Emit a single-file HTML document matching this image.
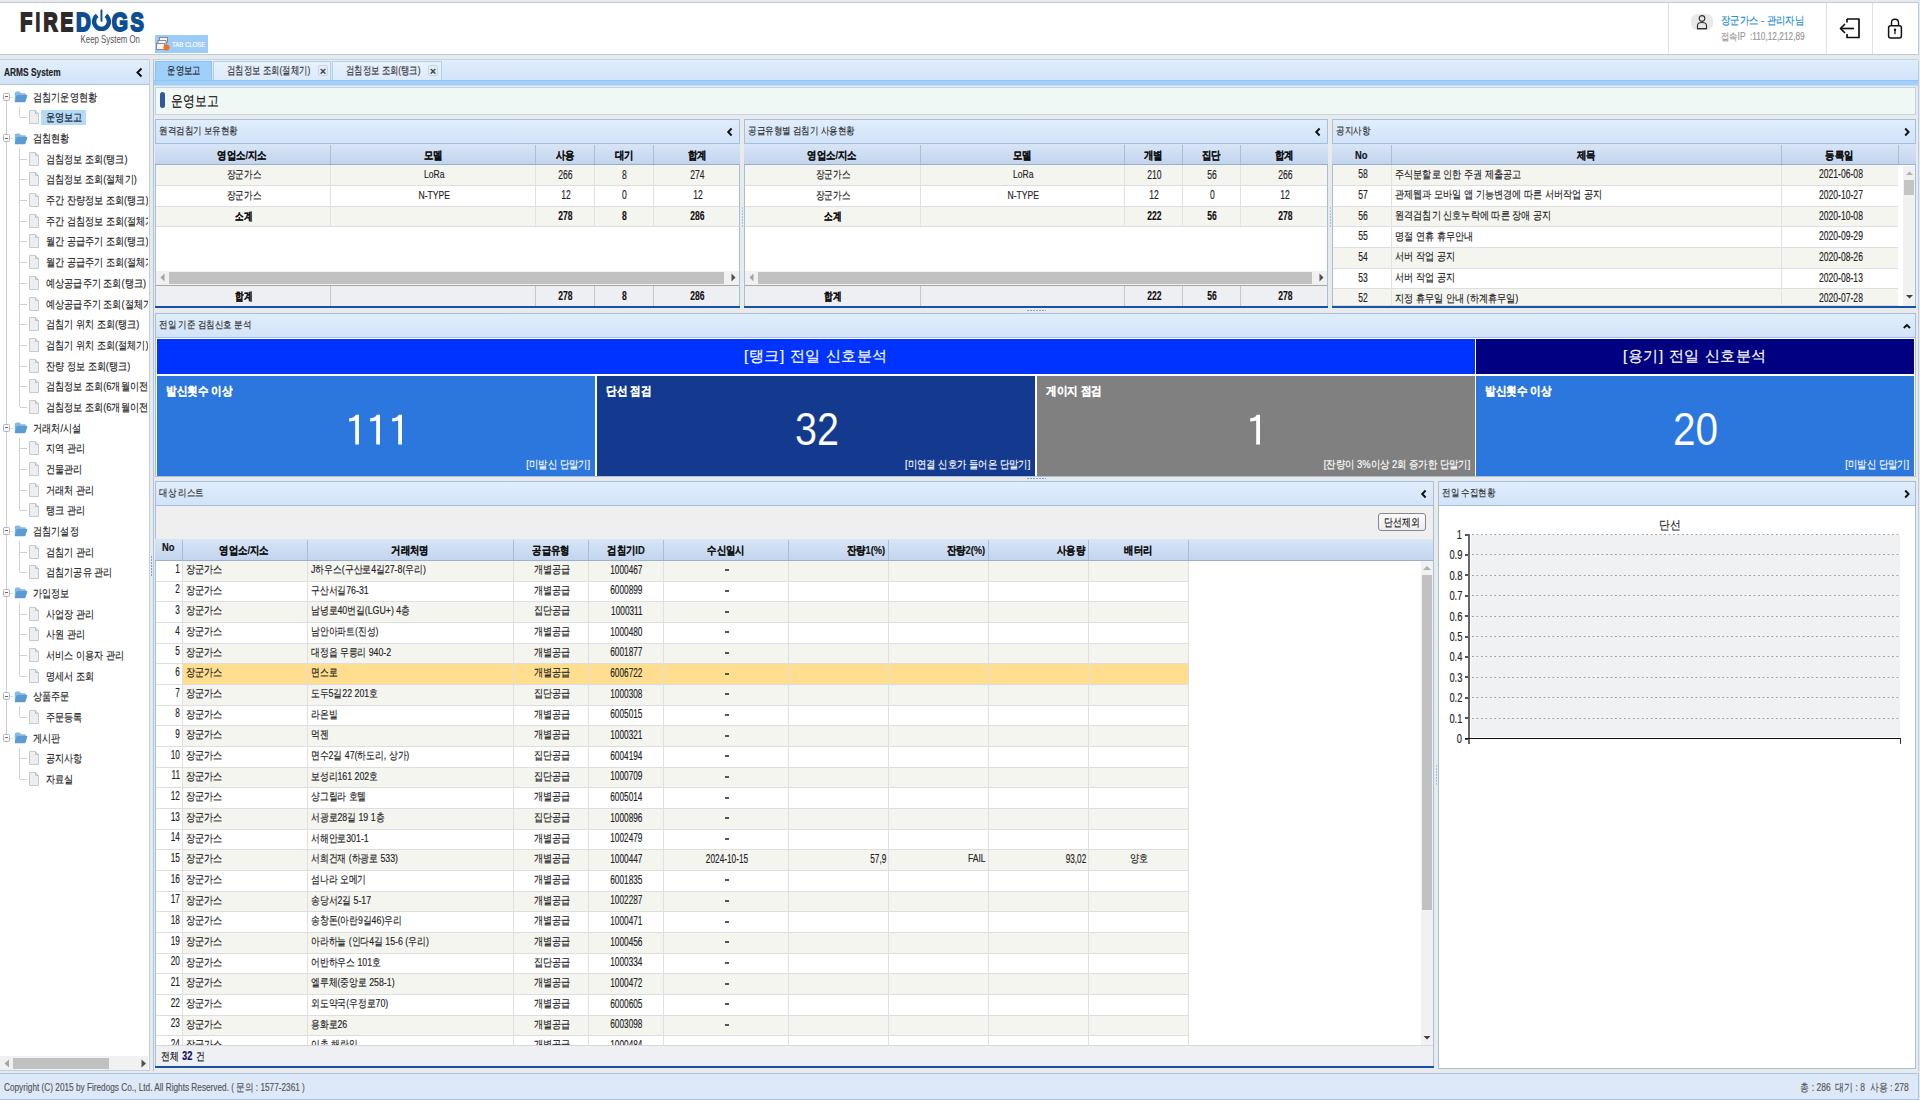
<!DOCTYPE html><html><head><meta charset="utf-8"><style>
html,body{margin:0;padding:0;}
body{width:1920px;height:1100px;overflow:hidden;position:relative;background:#e9e9e9;font-family:"Liberation Sans",sans-serif;}
body div{position:absolute;box-sizing:border-box;}
.tx{white-space:pre;height:auto;}
.tx span{display:inline-block;-webkit-text-stroke:0.15px currentColor;}
.phd{background:linear-gradient(#e0eefc,#d2e3f8);}
.ghd{background:linear-gradient(#d6e4f5,#c4d6ee);}
</style></head><body><div style="left:0px;top:2px;width:1919px;height:53px;background:#fff;border:1px solid #b9cde2;border-left:none;"></div>
<div style="left:1668px;top:3px;width:1px;height:51px;background:#e2e2e2;"></div>
<div style="left:1826px;top:3px;width:1px;height:51px;background:#e2e2e2;"></div>
<div style="left:1872px;top:3px;width:1px;height:51px;background:#e2e2e2;"></div>
<svg style="position:absolute;left:0;top:0" width="160" height="50"><text x="20.3" y="30.8" font-family="Liberation Sans" font-weight="bold" font-size="26" fill="#2d2a29" stroke="#2d2a29" stroke-width="2.0" textLength="11.999999999999996" lengthAdjust="spacingAndGlyphs">F</text><text x="35.8" y="30.8" font-family="Liberation Sans" font-weight="bold" font-size="26" fill="#2d2a29" stroke="#2d2a29" stroke-width="2.0" textLength="4.200000000000003" lengthAdjust="spacingAndGlyphs">I</text><text x="43.5" y="30.8" font-family="Liberation Sans" font-weight="bold" font-size="26" fill="#2d2a29" stroke="#2d2a29" stroke-width="2.0" textLength="14.100000000000001" lengthAdjust="spacingAndGlyphs">R</text><text x="60.4" y="30.8" font-family="Liberation Sans" font-weight="bold" font-size="26" fill="#2d2a29" stroke="#2d2a29" stroke-width="2.0" textLength="12.600000000000001" lengthAdjust="spacingAndGlyphs">E</text><text x="75.9" y="30.8" font-family="Liberation Sans" font-weight="bold" font-size="26" fill="#0d4d92" stroke="#0d4d92" stroke-width="2.0" textLength="14.799999999999997" lengthAdjust="spacingAndGlyphs">D</text><text x="111.7" y="30.8" font-family="Liberation Sans" font-weight="bold" font-size="26" fill="#0d4d92" stroke="#0d4d92" stroke-width="2.0" textLength="16.200000000000003" lengthAdjust="spacingAndGlyphs">G</text><text x="130.4" y="30.8" font-family="Liberation Sans" font-weight="bold" font-size="26" fill="#0d4d92" stroke="#0d4d92" stroke-width="2.0" textLength="13.299999999999983" lengthAdjust="spacingAndGlyphs">S</text><path d="M97.2 15.5 A7.4 7.4 0 1 0 105.8 15.5" fill="none" stroke="#0d4d92" stroke-width="4.3"/><rect x="100.5" y="9.6" width="1.9" height="12" fill="#0d4d92"/><text x="80.5" y="43" font-family="Liberation Sans" font-size="10.5" fill="#555" textLength="59.5" lengthAdjust="spacingAndGlyphs">Keep System On</text></svg>
<div style="left:155px;top:35px;width:53px;height:18px;background:#9dcbf8;"></div>
<svg style="position:absolute;left:156px;top:37px" width="14" height="14">
<rect x="3.5" y="0.5" width="8" height="5" fill="#f4f4f4" stroke="#777" stroke-width="0.8"/>
<rect x="2" y="3.5" width="8" height="5" fill="#f4f4f4" stroke="#777" stroke-width="0.8"/>
<rect x="0.5" y="6.5" width="8" height="6" fill="#f4f4f4" stroke="#777" stroke-width="0.8"/>
<circle cx="10.5" cy="10.5" r="3" fill="#f07020"/>
</svg>
<div class="tx" style="left:171.5px;top:35.8px;line-height:18px;font-size:8px;color:#fff;font-weight:normal;"><span style="transform:scaleX(0.75);transform-origin:0 50%">TAB CLOSE</span></div>
<div style="left:1691px;top:14px;width:22px;height:16px;background:#e9e9e9;border-radius:6px;"></div>
<svg style="position:absolute;left:1691px;top:14px" width="22" height="16">
<circle cx="11" cy="4.5" r="2.8" fill="none" stroke="#333" stroke-width="1.2"/>
<path d="M6.5 14.5 V11.5 Q6.5 8.5 11 8.5 Q15.5 8.5 15.5 11.5 V14.5 Z" fill="none" stroke="#333" stroke-width="1.2"/>
<line x1="6" y1="14.8" x2="16" y2="14.8" stroke="#333" stroke-width="1.2"/>
</svg>
<div class="tx" style="left:1721px;top:10px;line-height:20px;font-size:11px;color:#1d8ad6;font-weight:normal;"><span style="transform:scaleX(0.85);transform-origin:0 50%">장군가스 - 관리자님</span></div>
<div class="tx" style="left:1721px;top:26.7px;line-height:20px;font-size:10px;color:#969696;font-weight:normal;"><span style="transform:scaleX(0.83);transform-origin:0 50%">접속IP  :110,12,212,89</span></div>
<svg style="position:absolute;left:1838px;top:17px" width="24" height="23">
<path d="M9 2 H21 V20.5 H9 V17" fill="none" stroke="#111" stroke-width="1.7" stroke-linejoin="round"/>
<path d="M9 2 V5.5" fill="none" stroke="#111" stroke-width="1.7"/>
<path d="M2.5 11.5 H16" stroke="#111" stroke-width="1.7"/>
<path d="M7 7 L2.5 11.5 L7 16" fill="none" stroke="#111" stroke-width="1.7" stroke-linejoin="round"/>
</svg>
<svg style="position:absolute;left:1886px;top:17px" width="18" height="23">
<path d="M5.5 8.5 V5.5 Q5.5 2.2 9 2.2 Q12.5 2.2 12.5 5.5 V8.5" fill="none" stroke="#111" stroke-width="1.4"/>
<rect x="2.6" y="8.8" width="12.8" height="12.2" rx="2" fill="none" stroke="#111" stroke-width="1.5"/>
<circle cx="9" cy="12.8" r="1.2" fill="#111"/>
<rect x="8.4" y="13" width="1.2" height="4.2" fill="#111"/>
</svg>
<div style="left:0px;top:59px;width:150px;height:1012px;background:#fff;border:1px solid #c2d0de;border-left:none;border-top:none;"></div>
<div style="left:0px;top:59px;width:149px;height:26px;background:linear-gradient(#e3effc,#d1e3f8);border-bottom:1px solid #a8c6e6;border-top:1px solid #b8d0ea;"></div>
<div class="tx" style="left:4px;top:62px;line-height:20px;font-size:11px;color:#222;font-weight:bold;"><span style="transform:scaleX(0.76);transform-origin:0 50%">ARMS System</span></div>
<svg style="position:absolute;left:135px;top:67px" width="9" height="11"><path d="M6.5 1.5 L2.5 5.5 L6.5 9.5" fill="none" stroke="#111" stroke-width="2"/></svg>
<div style="left:0;top:0;width:148px;height:1056px;overflow:hidden;">
<svg style="position:absolute;left:13.5px;top:91.3px" width="14" height="12"><path d="M0.8 2.2 Q0.8 0.6 2.4 0.6 H5 Q5.8 0.6 6.4 1.4 L7 2.2 H10.6 Q12 2.2 12 3.6 V9.5 H0.8 Z" fill="#86b9e4"/><path d="M2.6 4.6 Q2.8 3.9 3.6 3.9 H12.6 Q13.6 3.9 13.3 4.9 L11.6 10.2 Q11.3 11.2 10.3 11.2 H1.4 Q0.5 11.2 0.8 10.3 Z" fill="#5b9ad4"/></svg>
<div style="left:3px;top:92.8px;width:7px;height:8px;background:linear-gradient(#fff,#eef0f3);border:1px solid #b0b4bb;border-radius:1.5px;"></div>
<div style="left:5px;top:96.3px;width:3px;height:1px;background:#6a6a6a;"></div>
<div style="left:10px;top:96.8px;width:3px;height:1px;background:#ddd;"></div>
<div class="tx" style="left:33px;top:86.8px;line-height:20px;font-size:11px;color:#222;font-weight:normal;"><span style="transform:scaleX(0.83);transform-origin:0 50%">검침기운영현황</span></div>
<svg style="position:absolute;left:29px;top:110.47px" width="10" height="14"><path d="M0.5 0.5 H6.5 L9.5 3.5 V13.5 H0.5 Z" fill="#eceef1" stroke="#c6cacf" stroke-width="1"/><path d="M6.5 0.5 V3.5 H9.5" fill="#d8dce0" stroke="#b5bac0" stroke-width="0.8"/></svg>
<div style="left:20px;top:117.47px;width:7px;height:1px;background:#d0d0d0;"></div>
<div style="left:41px;top:109.97px;width:45px;height:15px;background:#b4dafa;"></div>
<div class="tx" style="left:46px;top:107.47px;line-height:20px;font-size:11px;color:#111;font-weight:normal;"><span style="transform:scaleX(0.83);transform-origin:0 50%">운영보고</span></div>
<svg style="position:absolute;left:13.5px;top:132.64px" width="14" height="12"><path d="M0.8 2.2 Q0.8 0.6 2.4 0.6 H5 Q5.8 0.6 6.4 1.4 L7 2.2 H10.6 Q12 2.2 12 3.6 V9.5 H0.8 Z" fill="#86b9e4"/><path d="M2.6 4.6 Q2.8 3.9 3.6 3.9 H12.6 Q13.6 3.9 13.3 4.9 L11.6 10.2 Q11.3 11.2 10.3 11.2 H1.4 Q0.5 11.2 0.8 10.3 Z" fill="#5b9ad4"/></svg>
<div style="left:3px;top:134.14px;width:7px;height:8px;background:linear-gradient(#fff,#eef0f3);border:1px solid #b0b4bb;border-radius:1.5px;"></div>
<div style="left:5px;top:137.64px;width:3px;height:1px;background:#6a6a6a;"></div>
<div style="left:10px;top:138.14px;width:3px;height:1px;background:#ddd;"></div>
<div class="tx" style="left:33px;top:128.14px;line-height:20px;font-size:11px;color:#222;font-weight:normal;"><span style="transform:scaleX(0.83);transform-origin:0 50%">검침현황</span></div>
<svg style="position:absolute;left:29px;top:151.81px" width="10" height="14"><path d="M0.5 0.5 H6.5 L9.5 3.5 V13.5 H0.5 Z" fill="#eceef1" stroke="#c6cacf" stroke-width="1"/><path d="M6.5 0.5 V3.5 H9.5" fill="#d8dce0" stroke="#b5bac0" stroke-width="0.8"/></svg>
<div style="left:20px;top:158.81px;width:7px;height:1px;background:#d0d0d0;"></div>
<div class="tx" style="left:46px;top:148.81px;line-height:20px;font-size:11px;color:#222;font-weight:normal;"><span style="transform:scaleX(0.83);transform-origin:0 50%">검침정보 조회(탱크)</span></div>
<svg style="position:absolute;left:29px;top:172.48px" width="10" height="14"><path d="M0.5 0.5 H6.5 L9.5 3.5 V13.5 H0.5 Z" fill="#eceef1" stroke="#c6cacf" stroke-width="1"/><path d="M6.5 0.5 V3.5 H9.5" fill="#d8dce0" stroke="#b5bac0" stroke-width="0.8"/></svg>
<div style="left:20px;top:179.48px;width:7px;height:1px;background:#d0d0d0;"></div>
<div class="tx" style="left:46px;top:169.48px;line-height:20px;font-size:11px;color:#222;font-weight:normal;"><span style="transform:scaleX(0.83);transform-origin:0 50%">검침정보 조회(절체기)</span></div>
<svg style="position:absolute;left:29px;top:193.15px" width="10" height="14"><path d="M0.5 0.5 H6.5 L9.5 3.5 V13.5 H0.5 Z" fill="#eceef1" stroke="#c6cacf" stroke-width="1"/><path d="M6.5 0.5 V3.5 H9.5" fill="#d8dce0" stroke="#b5bac0" stroke-width="0.8"/></svg>
<div style="left:20px;top:200.15px;width:7px;height:1px;background:#d0d0d0;"></div>
<div class="tx" style="left:46px;top:190.15px;line-height:20px;font-size:11px;color:#222;font-weight:normal;"><span style="transform:scaleX(0.83);transform-origin:0 50%">주간 잔량정보 조회(탱크)</span></div>
<svg style="position:absolute;left:29px;top:213.82px" width="10" height="14"><path d="M0.5 0.5 H6.5 L9.5 3.5 V13.5 H0.5 Z" fill="#eceef1" stroke="#c6cacf" stroke-width="1"/><path d="M6.5 0.5 V3.5 H9.5" fill="#d8dce0" stroke="#b5bac0" stroke-width="0.8"/></svg>
<div style="left:20px;top:220.82px;width:7px;height:1px;background:#d0d0d0;"></div>
<div class="tx" style="left:46px;top:210.82px;line-height:20px;font-size:11px;color:#222;font-weight:normal;"><span style="transform:scaleX(0.83);transform-origin:0 50%">주간 검침정보 조회(절체기)</span></div>
<svg style="position:absolute;left:29px;top:234.49px" width="10" height="14"><path d="M0.5 0.5 H6.5 L9.5 3.5 V13.5 H0.5 Z" fill="#eceef1" stroke="#c6cacf" stroke-width="1"/><path d="M6.5 0.5 V3.5 H9.5" fill="#d8dce0" stroke="#b5bac0" stroke-width="0.8"/></svg>
<div style="left:20px;top:241.49px;width:7px;height:1px;background:#d0d0d0;"></div>
<div class="tx" style="left:46px;top:231.49px;line-height:20px;font-size:11px;color:#222;font-weight:normal;"><span style="transform:scaleX(0.83);transform-origin:0 50%">월간 공급주기 조회(탱크)</span></div>
<svg style="position:absolute;left:29px;top:255.16px" width="10" height="14"><path d="M0.5 0.5 H6.5 L9.5 3.5 V13.5 H0.5 Z" fill="#eceef1" stroke="#c6cacf" stroke-width="1"/><path d="M6.5 0.5 V3.5 H9.5" fill="#d8dce0" stroke="#b5bac0" stroke-width="0.8"/></svg>
<div style="left:20px;top:262.16px;width:7px;height:1px;background:#d0d0d0;"></div>
<div class="tx" style="left:46px;top:252.16px;line-height:20px;font-size:11px;color:#222;font-weight:normal;"><span style="transform:scaleX(0.83);transform-origin:0 50%">월간 공급주기 조회(절체기)</span></div>
<svg style="position:absolute;left:29px;top:275.83px" width="10" height="14"><path d="M0.5 0.5 H6.5 L9.5 3.5 V13.5 H0.5 Z" fill="#eceef1" stroke="#c6cacf" stroke-width="1"/><path d="M6.5 0.5 V3.5 H9.5" fill="#d8dce0" stroke="#b5bac0" stroke-width="0.8"/></svg>
<div style="left:20px;top:282.83px;width:7px;height:1px;background:#d0d0d0;"></div>
<div class="tx" style="left:46px;top:272.83px;line-height:20px;font-size:11px;color:#222;font-weight:normal;"><span style="transform:scaleX(0.83);transform-origin:0 50%">예상공급주기 조회(탱크)</span></div>
<svg style="position:absolute;left:29px;top:296.5px" width="10" height="14"><path d="M0.5 0.5 H6.5 L9.5 3.5 V13.5 H0.5 Z" fill="#eceef1" stroke="#c6cacf" stroke-width="1"/><path d="M6.5 0.5 V3.5 H9.5" fill="#d8dce0" stroke="#b5bac0" stroke-width="0.8"/></svg>
<div style="left:20px;top:303.5px;width:7px;height:1px;background:#d0d0d0;"></div>
<div class="tx" style="left:46px;top:293.5px;line-height:20px;font-size:11px;color:#222;font-weight:normal;"><span style="transform:scaleX(0.83);transform-origin:0 50%">예상공급주기 조회(절체기)</span></div>
<svg style="position:absolute;left:29px;top:317.17px" width="10" height="14"><path d="M0.5 0.5 H6.5 L9.5 3.5 V13.5 H0.5 Z" fill="#eceef1" stroke="#c6cacf" stroke-width="1"/><path d="M6.5 0.5 V3.5 H9.5" fill="#d8dce0" stroke="#b5bac0" stroke-width="0.8"/></svg>
<div style="left:20px;top:324.17px;width:7px;height:1px;background:#d0d0d0;"></div>
<div class="tx" style="left:46px;top:314.17px;line-height:20px;font-size:11px;color:#222;font-weight:normal;"><span style="transform:scaleX(0.83);transform-origin:0 50%">검침기 위치 조회(탱크)</span></div>
<svg style="position:absolute;left:29px;top:337.84px" width="10" height="14"><path d="M0.5 0.5 H6.5 L9.5 3.5 V13.5 H0.5 Z" fill="#eceef1" stroke="#c6cacf" stroke-width="1"/><path d="M6.5 0.5 V3.5 H9.5" fill="#d8dce0" stroke="#b5bac0" stroke-width="0.8"/></svg>
<div style="left:20px;top:344.84px;width:7px;height:1px;background:#d0d0d0;"></div>
<div class="tx" style="left:46px;top:334.84px;line-height:20px;font-size:11px;color:#222;font-weight:normal;"><span style="transform:scaleX(0.83);transform-origin:0 50%">검침기 위치 조회(절체기)</span></div>
<svg style="position:absolute;left:29px;top:358.51px" width="10" height="14"><path d="M0.5 0.5 H6.5 L9.5 3.5 V13.5 H0.5 Z" fill="#eceef1" stroke="#c6cacf" stroke-width="1"/><path d="M6.5 0.5 V3.5 H9.5" fill="#d8dce0" stroke="#b5bac0" stroke-width="0.8"/></svg>
<div style="left:20px;top:365.51px;width:7px;height:1px;background:#d0d0d0;"></div>
<div class="tx" style="left:46px;top:355.51px;line-height:20px;font-size:11px;color:#222;font-weight:normal;"><span style="transform:scaleX(0.83);transform-origin:0 50%">잔량 정보 조회(탱크)</span></div>
<svg style="position:absolute;left:29px;top:379.18px" width="10" height="14"><path d="M0.5 0.5 H6.5 L9.5 3.5 V13.5 H0.5 Z" fill="#eceef1" stroke="#c6cacf" stroke-width="1"/><path d="M6.5 0.5 V3.5 H9.5" fill="#d8dce0" stroke="#b5bac0" stroke-width="0.8"/></svg>
<div style="left:20px;top:386.18px;width:7px;height:1px;background:#d0d0d0;"></div>
<div class="tx" style="left:46px;top:376.18px;line-height:20px;font-size:11px;color:#222;font-weight:normal;"><span style="transform:scaleX(0.83);transform-origin:0 50%">검침정보 조회(6개월이전)</span></div>
<svg style="position:absolute;left:29px;top:399.85px" width="10" height="14"><path d="M0.5 0.5 H6.5 L9.5 3.5 V13.5 H0.5 Z" fill="#eceef1" stroke="#c6cacf" stroke-width="1"/><path d="M6.5 0.5 V3.5 H9.5" fill="#d8dce0" stroke="#b5bac0" stroke-width="0.8"/></svg>
<div style="left:20px;top:406.85px;width:7px;height:1px;background:#d0d0d0;"></div>
<div class="tx" style="left:46px;top:396.85px;line-height:20px;font-size:11px;color:#222;font-weight:normal;"><span style="transform:scaleX(0.83);transform-origin:0 50%">검침정보 조회(6개월이전)</span></div>
<svg style="position:absolute;left:13.5px;top:422.02px" width="14" height="12"><path d="M0.8 2.2 Q0.8 0.6 2.4 0.6 H5 Q5.8 0.6 6.4 1.4 L7 2.2 H10.6 Q12 2.2 12 3.6 V9.5 H0.8 Z" fill="#86b9e4"/><path d="M2.6 4.6 Q2.8 3.9 3.6 3.9 H12.6 Q13.6 3.9 13.3 4.9 L11.6 10.2 Q11.3 11.2 10.3 11.2 H1.4 Q0.5 11.2 0.8 10.3 Z" fill="#5b9ad4"/></svg>
<div style="left:3px;top:423.52px;width:7px;height:8px;background:linear-gradient(#fff,#eef0f3);border:1px solid #b0b4bb;border-radius:1.5px;"></div>
<div style="left:5px;top:427.02px;width:3px;height:1px;background:#6a6a6a;"></div>
<div style="left:10px;top:427.52px;width:3px;height:1px;background:#ddd;"></div>
<div class="tx" style="left:33px;top:417.52px;line-height:20px;font-size:11px;color:#222;font-weight:normal;"><span style="transform:scaleX(0.83);transform-origin:0 50%">거래처/시설</span></div>
<svg style="position:absolute;left:29px;top:441.19px" width="10" height="14"><path d="M0.5 0.5 H6.5 L9.5 3.5 V13.5 H0.5 Z" fill="#eceef1" stroke="#c6cacf" stroke-width="1"/><path d="M6.5 0.5 V3.5 H9.5" fill="#d8dce0" stroke="#b5bac0" stroke-width="0.8"/></svg>
<div style="left:20px;top:448.19px;width:7px;height:1px;background:#d0d0d0;"></div>
<div class="tx" style="left:46px;top:438.19px;line-height:20px;font-size:11px;color:#222;font-weight:normal;"><span style="transform:scaleX(0.83);transform-origin:0 50%">지역 관리</span></div>
<svg style="position:absolute;left:29px;top:461.86px" width="10" height="14"><path d="M0.5 0.5 H6.5 L9.5 3.5 V13.5 H0.5 Z" fill="#eceef1" stroke="#c6cacf" stroke-width="1"/><path d="M6.5 0.5 V3.5 H9.5" fill="#d8dce0" stroke="#b5bac0" stroke-width="0.8"/></svg>
<div style="left:20px;top:468.86px;width:7px;height:1px;background:#d0d0d0;"></div>
<div class="tx" style="left:46px;top:458.86px;line-height:20px;font-size:11px;color:#222;font-weight:normal;"><span style="transform:scaleX(0.83);transform-origin:0 50%">건물관리</span></div>
<svg style="position:absolute;left:29px;top:482.53px" width="10" height="14"><path d="M0.5 0.5 H6.5 L9.5 3.5 V13.5 H0.5 Z" fill="#eceef1" stroke="#c6cacf" stroke-width="1"/><path d="M6.5 0.5 V3.5 H9.5" fill="#d8dce0" stroke="#b5bac0" stroke-width="0.8"/></svg>
<div style="left:20px;top:489.53px;width:7px;height:1px;background:#d0d0d0;"></div>
<div class="tx" style="left:46px;top:479.53px;line-height:20px;font-size:11px;color:#222;font-weight:normal;"><span style="transform:scaleX(0.83);transform-origin:0 50%">거래처 관리</span></div>
<svg style="position:absolute;left:29px;top:503.2px" width="10" height="14"><path d="M0.5 0.5 H6.5 L9.5 3.5 V13.5 H0.5 Z" fill="#eceef1" stroke="#c6cacf" stroke-width="1"/><path d="M6.5 0.5 V3.5 H9.5" fill="#d8dce0" stroke="#b5bac0" stroke-width="0.8"/></svg>
<div style="left:20px;top:510.2px;width:7px;height:1px;background:#d0d0d0;"></div>
<div class="tx" style="left:46px;top:500.2px;line-height:20px;font-size:11px;color:#222;font-weight:normal;"><span style="transform:scaleX(0.83);transform-origin:0 50%">탱크 관리</span></div>
<svg style="position:absolute;left:13.5px;top:525.37px" width="14" height="12"><path d="M0.8 2.2 Q0.8 0.6 2.4 0.6 H5 Q5.8 0.6 6.4 1.4 L7 2.2 H10.6 Q12 2.2 12 3.6 V9.5 H0.8 Z" fill="#86b9e4"/><path d="M2.6 4.6 Q2.8 3.9 3.6 3.9 H12.6 Q13.6 3.9 13.3 4.9 L11.6 10.2 Q11.3 11.2 10.3 11.2 H1.4 Q0.5 11.2 0.8 10.3 Z" fill="#5b9ad4"/></svg>
<div style="left:3px;top:526.87px;width:7px;height:8px;background:linear-gradient(#fff,#eef0f3);border:1px solid #b0b4bb;border-radius:1.5px;"></div>
<div style="left:5px;top:530.37px;width:3px;height:1px;background:#6a6a6a;"></div>
<div style="left:10px;top:530.87px;width:3px;height:1px;background:#ddd;"></div>
<div class="tx" style="left:33px;top:520.87px;line-height:20px;font-size:11px;color:#222;font-weight:normal;"><span style="transform:scaleX(0.83);transform-origin:0 50%">검침기설정</span></div>
<svg style="position:absolute;left:29px;top:544.54px" width="10" height="14"><path d="M0.5 0.5 H6.5 L9.5 3.5 V13.5 H0.5 Z" fill="#eceef1" stroke="#c6cacf" stroke-width="1"/><path d="M6.5 0.5 V3.5 H9.5" fill="#d8dce0" stroke="#b5bac0" stroke-width="0.8"/></svg>
<div style="left:20px;top:551.54px;width:7px;height:1px;background:#d0d0d0;"></div>
<div class="tx" style="left:46px;top:541.54px;line-height:20px;font-size:11px;color:#222;font-weight:normal;"><span style="transform:scaleX(0.83);transform-origin:0 50%">검침기 관리</span></div>
<svg style="position:absolute;left:29px;top:565.21px" width="10" height="14"><path d="M0.5 0.5 H6.5 L9.5 3.5 V13.5 H0.5 Z" fill="#eceef1" stroke="#c6cacf" stroke-width="1"/><path d="M6.5 0.5 V3.5 H9.5" fill="#d8dce0" stroke="#b5bac0" stroke-width="0.8"/></svg>
<div style="left:20px;top:572.21px;width:7px;height:1px;background:#d0d0d0;"></div>
<div class="tx" style="left:46px;top:562.21px;line-height:20px;font-size:11px;color:#222;font-weight:normal;"><span style="transform:scaleX(0.83);transform-origin:0 50%">검침기공유 관리</span></div>
<svg style="position:absolute;left:13.5px;top:587.38px" width="14" height="12"><path d="M0.8 2.2 Q0.8 0.6 2.4 0.6 H5 Q5.8 0.6 6.4 1.4 L7 2.2 H10.6 Q12 2.2 12 3.6 V9.5 H0.8 Z" fill="#86b9e4"/><path d="M2.6 4.6 Q2.8 3.9 3.6 3.9 H12.6 Q13.6 3.9 13.3 4.9 L11.6 10.2 Q11.3 11.2 10.3 11.2 H1.4 Q0.5 11.2 0.8 10.3 Z" fill="#5b9ad4"/></svg>
<div style="left:3px;top:588.88px;width:7px;height:8px;background:linear-gradient(#fff,#eef0f3);border:1px solid #b0b4bb;border-radius:1.5px;"></div>
<div style="left:5px;top:592.38px;width:3px;height:1px;background:#6a6a6a;"></div>
<div style="left:10px;top:592.88px;width:3px;height:1px;background:#ddd;"></div>
<div class="tx" style="left:33px;top:582.88px;line-height:20px;font-size:11px;color:#222;font-weight:normal;"><span style="transform:scaleX(0.83);transform-origin:0 50%">가입정보</span></div>
<svg style="position:absolute;left:29px;top:606.55px" width="10" height="14"><path d="M0.5 0.5 H6.5 L9.5 3.5 V13.5 H0.5 Z" fill="#eceef1" stroke="#c6cacf" stroke-width="1"/><path d="M6.5 0.5 V3.5 H9.5" fill="#d8dce0" stroke="#b5bac0" stroke-width="0.8"/></svg>
<div style="left:20px;top:613.55px;width:7px;height:1px;background:#d0d0d0;"></div>
<div class="tx" style="left:46px;top:603.55px;line-height:20px;font-size:11px;color:#222;font-weight:normal;"><span style="transform:scaleX(0.83);transform-origin:0 50%">사업장 관리</span></div>
<svg style="position:absolute;left:29px;top:627.22px" width="10" height="14"><path d="M0.5 0.5 H6.5 L9.5 3.5 V13.5 H0.5 Z" fill="#eceef1" stroke="#c6cacf" stroke-width="1"/><path d="M6.5 0.5 V3.5 H9.5" fill="#d8dce0" stroke="#b5bac0" stroke-width="0.8"/></svg>
<div style="left:20px;top:634.22px;width:7px;height:1px;background:#d0d0d0;"></div>
<div class="tx" style="left:46px;top:624.22px;line-height:20px;font-size:11px;color:#222;font-weight:normal;"><span style="transform:scaleX(0.83);transform-origin:0 50%">사원 관리</span></div>
<svg style="position:absolute;left:29px;top:647.89px" width="10" height="14"><path d="M0.5 0.5 H6.5 L9.5 3.5 V13.5 H0.5 Z" fill="#eceef1" stroke="#c6cacf" stroke-width="1"/><path d="M6.5 0.5 V3.5 H9.5" fill="#d8dce0" stroke="#b5bac0" stroke-width="0.8"/></svg>
<div style="left:20px;top:654.89px;width:7px;height:1px;background:#d0d0d0;"></div>
<div class="tx" style="left:46px;top:644.89px;line-height:20px;font-size:11px;color:#222;font-weight:normal;"><span style="transform:scaleX(0.83);transform-origin:0 50%">서비스 이용자 관리</span></div>
<svg style="position:absolute;left:29px;top:668.56px" width="10" height="14"><path d="M0.5 0.5 H6.5 L9.5 3.5 V13.5 H0.5 Z" fill="#eceef1" stroke="#c6cacf" stroke-width="1"/><path d="M6.5 0.5 V3.5 H9.5" fill="#d8dce0" stroke="#b5bac0" stroke-width="0.8"/></svg>
<div style="left:20px;top:675.56px;width:7px;height:1px;background:#d0d0d0;"></div>
<div class="tx" style="left:46px;top:665.56px;line-height:20px;font-size:11px;color:#222;font-weight:normal;"><span style="transform:scaleX(0.83);transform-origin:0 50%">명세서 조회</span></div>
<svg style="position:absolute;left:13.5px;top:690.73px" width="14" height="12"><path d="M0.8 2.2 Q0.8 0.6 2.4 0.6 H5 Q5.8 0.6 6.4 1.4 L7 2.2 H10.6 Q12 2.2 12 3.6 V9.5 H0.8 Z" fill="#86b9e4"/><path d="M2.6 4.6 Q2.8 3.9 3.6 3.9 H12.6 Q13.6 3.9 13.3 4.9 L11.6 10.2 Q11.3 11.2 10.3 11.2 H1.4 Q0.5 11.2 0.8 10.3 Z" fill="#5b9ad4"/></svg>
<div style="left:3px;top:692.23px;width:7px;height:8px;background:linear-gradient(#fff,#eef0f3);border:1px solid #b0b4bb;border-radius:1.5px;"></div>
<div style="left:5px;top:695.73px;width:3px;height:1px;background:#6a6a6a;"></div>
<div style="left:10px;top:696.23px;width:3px;height:1px;background:#ddd;"></div>
<div class="tx" style="left:33px;top:686.23px;line-height:20px;font-size:11px;color:#222;font-weight:normal;"><span style="transform:scaleX(0.83);transform-origin:0 50%">상품주문</span></div>
<svg style="position:absolute;left:29px;top:709.9px" width="10" height="14"><path d="M0.5 0.5 H6.5 L9.5 3.5 V13.5 H0.5 Z" fill="#eceef1" stroke="#c6cacf" stroke-width="1"/><path d="M6.5 0.5 V3.5 H9.5" fill="#d8dce0" stroke="#b5bac0" stroke-width="0.8"/></svg>
<div style="left:20px;top:716.9px;width:7px;height:1px;background:#d0d0d0;"></div>
<div class="tx" style="left:46px;top:706.9px;line-height:20px;font-size:11px;color:#222;font-weight:normal;"><span style="transform:scaleX(0.83);transform-origin:0 50%">주문등록</span></div>
<svg style="position:absolute;left:13.5px;top:732.07px" width="14" height="12"><path d="M0.8 2.2 Q0.8 0.6 2.4 0.6 H5 Q5.8 0.6 6.4 1.4 L7 2.2 H10.6 Q12 2.2 12 3.6 V9.5 H0.8 Z" fill="#86b9e4"/><path d="M2.6 4.6 Q2.8 3.9 3.6 3.9 H12.6 Q13.6 3.9 13.3 4.9 L11.6 10.2 Q11.3 11.2 10.3 11.2 H1.4 Q0.5 11.2 0.8 10.3 Z" fill="#5b9ad4"/></svg>
<div style="left:3px;top:733.57px;width:7px;height:8px;background:linear-gradient(#fff,#eef0f3);border:1px solid #b0b4bb;border-radius:1.5px;"></div>
<div style="left:5px;top:737.07px;width:3px;height:1px;background:#6a6a6a;"></div>
<div style="left:10px;top:737.57px;width:3px;height:1px;background:#ddd;"></div>
<div class="tx" style="left:33px;top:727.57px;line-height:20px;font-size:11px;color:#222;font-weight:normal;"><span style="transform:scaleX(0.83);transform-origin:0 50%">게시판</span></div>
<svg style="position:absolute;left:29px;top:751.24px" width="10" height="14"><path d="M0.5 0.5 H6.5 L9.5 3.5 V13.5 H0.5 Z" fill="#eceef1" stroke="#c6cacf" stroke-width="1"/><path d="M6.5 0.5 V3.5 H9.5" fill="#d8dce0" stroke="#b5bac0" stroke-width="0.8"/></svg>
<div style="left:20px;top:758.24px;width:7px;height:1px;background:#d0d0d0;"></div>
<div class="tx" style="left:46px;top:748.24px;line-height:20px;font-size:11px;color:#222;font-weight:normal;"><span style="transform:scaleX(0.83);transform-origin:0 50%">공지사항</span></div>
<svg style="position:absolute;left:29px;top:771.91px" width="10" height="14"><path d="M0.5 0.5 H6.5 L9.5 3.5 V13.5 H0.5 Z" fill="#eceef1" stroke="#c6cacf" stroke-width="1"/><path d="M6.5 0.5 V3.5 H9.5" fill="#d8dce0" stroke="#b5bac0" stroke-width="0.8"/></svg>
<div style="left:20px;top:778.91px;width:7px;height:1px;background:#d0d0d0;"></div>
<div class="tx" style="left:46px;top:768.91px;line-height:20px;font-size:11px;color:#222;font-weight:normal;"><span style="transform:scaleX(0.83);transform-origin:0 50%">자료실</span></div>
<div style="left:6px;top:100.8px;width:1px;height:33.34px;background:#cfcfcf;"></div>
<div style="left:19px;top:106.8px;width:1px;height:10.67px;background:#d0d0d0;"></div>
<div style="left:6px;top:142.14px;width:1px;height:281.38px;background:#cfcfcf;"></div>
<div style="left:19px;top:148.14px;width:1px;height:258.71px;background:#d0d0d0;"></div>
<div style="left:6px;top:431.52px;width:1px;height:95.35px;background:#cfcfcf;"></div>
<div style="left:19px;top:437.52px;width:1px;height:72.68px;background:#d0d0d0;"></div>
<div style="left:6px;top:534.87px;width:1px;height:54.01px;background:#cfcfcf;"></div>
<div style="left:19px;top:540.87px;width:1px;height:31.34px;background:#d0d0d0;"></div>
<div style="left:6px;top:596.88px;width:1px;height:95.35px;background:#cfcfcf;"></div>
<div style="left:19px;top:602.88px;width:1px;height:72.68px;background:#d0d0d0;"></div>
<div style="left:6px;top:700.23px;width:1px;height:33.34px;background:#cfcfcf;"></div>
<div style="left:19px;top:706.23px;width:1px;height:10.67px;background:#d0d0d0;"></div>
<div style="left:19px;top:747.57px;width:1px;height:31.34px;background:#d0d0d0;"></div>
</div>
<div style="left:0px;top:1056px;width:148px;height:14px;background:#f1f1f1;"></div>
<div style="left:13px;top:1058px;width:96px;height:11px;background:#c1c1c1;"></div>
<svg style="position:absolute;left:3px;top:1059px" width="8" height="9"><path d="M6 0.5 L1.5 4.5 L6 8.5 Z" fill="#a3a3a3"/></svg>
<svg style="position:absolute;left:140px;top:1059px" width="8" height="9"><path d="M1.5 0.5 L6 4.5 L1.5 8.5 Z" fill="#505050"/></svg>
<div style="left:153px;top:59px;width:1766px;height:1012px;background:#eaeaea;border-left:1px solid #a9c5e2;border-top:1px solid #c0d4ea;border-right:1px solid #b5cde6;border-top-right-radius:3px;"></div>
<div style="left:154px;top:60px;width:1764px;height:21px;background:linear-gradient(#dfedfc,#d3e4f9);"></div>
<div style="left:155px;top:61px;width:57px;height:20px;background:#9fd0fb;border:1px solid #8fc0ee;border-bottom:none;"></div>
<div class="tx" style="left:-116.5px;width:600px;text-align:center;top:60px;line-height:20px;font-size:11px;color:#222;font-weight:normal;"><span style="transform:scaleX(0.76);transform-origin:50% 50%">운영보고</span></div>
<div style="left:213px;top:61px;width:118px;height:20px;background:linear-gradient(#e9f2fd,#dbe9fb);border:1px solid #b5cfe9;border-bottom:none;"></div>
<div class="tx" style="left:-31px;width:600px;text-align:center;top:60px;line-height:20px;font-size:11px;color:#333;font-weight:normal;"><span style="transform:scaleX(0.76);transform-origin:50% 50%">검침정보 조회(절체기)</span></div>
<div style="left:318px;top:65px;width:10px;height:11px;background:#e4eefb;border:1px solid #c2d6ec;border-radius:2px;"></div>
<div class="tx" style="left:23px;width:600px;text-align:center;top:60.5px;line-height:20px;font-size:11px;color:#444;font-weight:bold;"><span style="transform:scaleX(1);transform-origin:50% 50%">×</span></div>
<div style="left:332px;top:61px;width:110px;height:20px;background:linear-gradient(#e9f2fd,#dbe9fb);border:1px solid #b5cfe9;border-bottom:none;"></div>
<div class="tx" style="left:83px;width:600px;text-align:center;top:60px;line-height:20px;font-size:11px;color:#333;font-weight:normal;"><span style="transform:scaleX(0.76);transform-origin:50% 50%">검침정보 조회(탱크)</span></div>
<div style="left:428px;top:65px;width:10px;height:11px;background:#e4eefb;border:1px solid #c2d6ec;border-radius:2px;"></div>
<div class="tx" style="left:133px;width:600px;text-align:center;top:60.5px;line-height:20px;font-size:11px;color:#444;font-weight:bold;"><span style="transform:scaleX(1);transform-origin:50% 50%">×</span></div>
<div style="left:154px;top:80px;width:1764px;height:5px;background:#9fd0fb;border-top:1px solid #99c3ea;"></div>
<div style="left:154px;top:85px;width:1764px;height:1px;background:#c8dcee;"></div>
<div style="left:155px;top:87px;width:1761px;height:28px;background:#f0f8f5;border:1px solid #c0d5e3;"></div>
<div style="left:160px;top:92px;width:5px;height:16px;background:#2f5b98;border-radius:3px;"></div>
<div class="tx" style="left:171px;top:90.6px;line-height:20px;font-size:15px;color:#111;font-weight:normal;"><span style="transform:scaleX(0.79);transform-origin:0 50%">운영보고</span></div>
<div style="left:155px;top:119px;width:585px;height:189px;background:#fff;border:1px solid #a3c0dc;"></div>
<div style="left:156px;top:120px;width:583px;height:24px;background:linear-gradient(#e0eefc,#d2e3f8);border-bottom:1px solid #a3bfdc;"></div>
<div class="tx" style="left:159px;top:121px;line-height:20px;font-size:10px;color:#2a2a2a;font-weight:normal;"><span style="transform:scaleX(0.85);transform-origin:0 50%">원격검침기 보유현황</span></div>
<svg style="position:absolute;left:726px;top:127px" width="8" height="10"><path d="M5.6 1.5 L2.2 5 L5.6 8.5" fill="none" stroke="#111" stroke-width="1.9"/></svg>
<div style="left:155px;top:144px;width:585px;height:21px;background:linear-gradient(#d7e5f6,#c3d5ee);border-bottom:1px solid #98b1cc;"></div>
<div style="left:330px;top:145px;width:1px;height:19px;background:#a9bdd6;"></div>
<div style="left:535px;top:145px;width:1px;height:19px;background:#a9bdd6;"></div>
<div style="left:594px;top:145px;width:1px;height:19px;background:#a9bdd6;"></div>
<div style="left:653px;top:145px;width:1px;height:19px;background:#a9bdd6;"></div>
<div class="tx" style="left:-57.5px;width:600px;text-align:center;top:144.5px;line-height:20px;font-size:11px;color:#111;font-weight:bold;"><span style="transform:scaleX(0.85);transform-origin:50% 50%">영업소/지소</span></div>
<div class="tx" style="left:132.5px;width:600px;text-align:center;top:144.5px;line-height:20px;font-size:11px;color:#111;font-weight:bold;"><span style="transform:scaleX(0.85);transform-origin:50% 50%">모델</span></div>
<div class="tx" style="left:264.5px;width:600px;text-align:center;top:144.5px;line-height:20px;font-size:11px;color:#111;font-weight:bold;"><span style="transform:scaleX(0.85);transform-origin:50% 50%">사용</span></div>
<div class="tx" style="left:323.5px;width:600px;text-align:center;top:144.5px;line-height:20px;font-size:11px;color:#111;font-weight:bold;"><span style="transform:scaleX(0.85);transform-origin:50% 50%">대기</span></div>
<div class="tx" style="left:396.5px;width:600px;text-align:center;top:144.5px;line-height:20px;font-size:11px;color:#111;font-weight:bold;"><span style="transform:scaleX(0.85);transform-origin:50% 50%">합계</span></div>
<div style="left:156px;top:165.3px;width:583px;height:20.67px;background:#f5f5f0;border-bottom:1px solid #dedede;"></div>
<div style="left:330px;top:165.3px;width:1px;height:20.67px;background:#e2e2e2;"></div>
<div style="left:535px;top:165.3px;width:1px;height:20.67px;background:#e2e2e2;"></div>
<div style="left:594px;top:165.3px;width:1px;height:20.67px;background:#e2e2e2;"></div>
<div style="left:653px;top:165.3px;width:1px;height:20.67px;background:#e2e2e2;"></div>
<div class="tx" style="left:-56.30000000000001px;width:600px;text-align:center;top:164.3px;line-height:20px;font-size:11px;color:#222;font-weight:normal;"><span style="transform:scaleX(0.78);transform-origin:50% 50%">장군가스</span></div>
<div class="tx" style="left:133.7px;width:600px;text-align:center;top:164.3px;line-height:20px;font-size:11px;color:#222;font-weight:normal;"><span style="transform:scaleX(0.78);transform-origin:50% 50%">LoRa</span></div>
<div class="tx" style="left:265.70000000000005px;width:600px;text-align:center;top:164.8px;line-height:20px;font-size:12.5px;color:#222;font-weight:normal;"><span style="transform:scaleX(0.686);transform-origin:50% 50%">266</span></div>
<div class="tx" style="left:324.70000000000005px;width:600px;text-align:center;top:164.8px;line-height:20px;font-size:12.5px;color:#222;font-weight:normal;"><span style="transform:scaleX(0.686);transform-origin:50% 50%">8</span></div>
<div class="tx" style="left:397.70000000000005px;width:600px;text-align:center;top:164.8px;line-height:20px;font-size:12.5px;color:#222;font-weight:normal;"><span style="transform:scaleX(0.686);transform-origin:50% 50%">274</span></div>
<div style="left:156px;top:185.97px;width:583px;height:20.67px;background:#fff;border-bottom:1px solid #dedede;"></div>
<div style="left:330px;top:185.97px;width:1px;height:20.67px;background:#e2e2e2;"></div>
<div style="left:535px;top:185.97px;width:1px;height:20.67px;background:#e2e2e2;"></div>
<div style="left:594px;top:185.97px;width:1px;height:20.67px;background:#e2e2e2;"></div>
<div style="left:653px;top:185.97px;width:1px;height:20.67px;background:#e2e2e2;"></div>
<div class="tx" style="left:-56.30000000000001px;width:600px;text-align:center;top:184.97px;line-height:20px;font-size:11px;color:#222;font-weight:normal;"><span style="transform:scaleX(0.78);transform-origin:50% 50%">장군가스</span></div>
<div class="tx" style="left:133.7px;width:600px;text-align:center;top:184.97px;line-height:20px;font-size:11px;color:#222;font-weight:normal;"><span style="transform:scaleX(0.78);transform-origin:50% 50%">N-TYPE</span></div>
<div class="tx" style="left:265.70000000000005px;width:600px;text-align:center;top:185.47px;line-height:20px;font-size:12.5px;color:#222;font-weight:normal;"><span style="transform:scaleX(0.686);transform-origin:50% 50%">12</span></div>
<div class="tx" style="left:324.70000000000005px;width:600px;text-align:center;top:185.47px;line-height:20px;font-size:12.5px;color:#222;font-weight:normal;"><span style="transform:scaleX(0.686);transform-origin:50% 50%">0</span></div>
<div class="tx" style="left:397.70000000000005px;width:600px;text-align:center;top:185.47px;line-height:20px;font-size:12.5px;color:#222;font-weight:normal;"><span style="transform:scaleX(0.686);transform-origin:50% 50%">12</span></div>
<div style="left:156px;top:206.64px;width:583px;height:20.67px;background:#f5f5f0;border-bottom:1px solid #dedede;"></div>
<div style="left:330px;top:206.64px;width:1px;height:20.67px;background:#e2e2e2;"></div>
<div style="left:535px;top:206.64px;width:1px;height:20.67px;background:#e2e2e2;"></div>
<div style="left:594px;top:206.64px;width:1px;height:20.67px;background:#e2e2e2;"></div>
<div style="left:653px;top:206.64px;width:1px;height:20.67px;background:#e2e2e2;"></div>
<div class="tx" style="left:-56.30000000000001px;width:600px;text-align:center;top:205.64px;line-height:20px;font-size:11px;color:#111;font-weight:bold;"><span style="transform:scaleX(0.78);transform-origin:50% 50%">소계</span></div>
<div class="tx" style="left:133.7px;width:600px;text-align:center;top:205.64px;line-height:20px;font-size:11px;color:#111;font-weight:bold;"><span style="transform:scaleX(0.78);transform-origin:50% 50%"></span></div>
<div class="tx" style="left:265.70000000000005px;width:600px;text-align:center;top:206.14px;line-height:20px;font-size:12.5px;color:#111;font-weight:bold;"><span style="transform:scaleX(0.686);transform-origin:50% 50%">278</span></div>
<div class="tx" style="left:324.70000000000005px;width:600px;text-align:center;top:206.14px;line-height:20px;font-size:12.5px;color:#111;font-weight:bold;"><span style="transform:scaleX(0.686);transform-origin:50% 50%">8</span></div>
<div class="tx" style="left:397.70000000000005px;width:600px;text-align:center;top:206.14px;line-height:20px;font-size:12.5px;color:#111;font-weight:bold;"><span style="transform:scaleX(0.686);transform-origin:50% 50%">286</span></div>
<div style="left:156px;top:271px;width:583px;height:14px;background:#f1f1f1;"></div>
<div style="left:169px;top:272px;width:555px;height:12px;background:#c1c1c1;"></div>
<svg style="position:absolute;left:159px;top:273px" width="7" height="9"><path d="M5.5 0.5 L1.5 4.5 L5.5 8.5 Z" fill="#a3a3a3"/></svg>
<svg style="position:absolute;left:730px;top:273px" width="7" height="9"><path d="M1.5 0.5 L5.5 4.5 L1.5 8.5 Z" fill="#505050"/></svg>
<div style="left:156px;top:285px;width:583px;height:21px;background:#eeeff3;border-top:1px solid #a5a5a5;"></div>
<div style="left:330px;top:286px;width:1px;height:20px;background:#c9c9c9;"></div>
<div style="left:535px;top:286px;width:1px;height:20px;background:#c9c9c9;"></div>
<div style="left:594px;top:286px;width:1px;height:20px;background:#c9c9c9;"></div>
<div style="left:653px;top:286px;width:1px;height:20px;background:#c9c9c9;"></div>
<div class="tx" style="left:-56.30000000000001px;width:600px;text-align:center;top:285.5px;line-height:20px;font-size:11px;color:#111;font-weight:bold;"><span style="transform:scaleX(0.78);transform-origin:50% 50%">합계</span></div>
<div class="tx" style="left:133.7px;width:600px;text-align:center;top:285.5px;line-height:20px;font-size:11px;color:#111;font-weight:bold;"><span style="transform:scaleX(0.78);transform-origin:50% 50%"></span></div>
<div class="tx" style="left:265.70000000000005px;width:600px;text-align:center;top:286.0px;line-height:20px;font-size:12.5px;color:#111;font-weight:bold;"><span style="transform:scaleX(0.686);transform-origin:50% 50%">278</span></div>
<div class="tx" style="left:324.70000000000005px;width:600px;text-align:center;top:286.0px;line-height:20px;font-size:12.5px;color:#111;font-weight:bold;"><span style="transform:scaleX(0.686);transform-origin:50% 50%">8</span></div>
<div class="tx" style="left:397.70000000000005px;width:600px;text-align:center;top:286.0px;line-height:20px;font-size:12.5px;color:#111;font-weight:bold;"><span style="transform:scaleX(0.686);transform-origin:50% 50%">286</span></div>
<div style="left:155px;top:306px;width:585px;height:2px;background:#1553a7;"></div>
<div style="left:744px;top:119px;width:584px;height:189px;background:#fff;border:1px solid #a3c0dc;"></div>
<div style="left:745px;top:120px;width:582px;height:24px;background:linear-gradient(#e0eefc,#d2e3f8);border-bottom:1px solid #a3bfdc;"></div>
<div class="tx" style="left:748px;top:121px;line-height:20px;font-size:10px;color:#2a2a2a;font-weight:normal;"><span style="transform:scaleX(0.85);transform-origin:0 50%">공급유형별 검침기 사용현황</span></div>
<svg style="position:absolute;left:1314px;top:127px" width="8" height="10"><path d="M5.6 1.5 L2.2 5 L5.6 8.5" fill="none" stroke="#111" stroke-width="1.9"/></svg>
<div style="left:744px;top:144px;width:584px;height:21px;background:linear-gradient(#d7e5f6,#c3d5ee);border-bottom:1px solid #98b1cc;"></div>
<div style="left:920px;top:145px;width:1px;height:19px;background:#a9bdd6;"></div>
<div style="left:1124px;top:145px;width:1px;height:19px;background:#a9bdd6;"></div>
<div style="left:1182px;top:145px;width:1px;height:19px;background:#a9bdd6;"></div>
<div style="left:1240px;top:145px;width:1px;height:19px;background:#a9bdd6;"></div>
<div class="tx" style="left:532.0px;width:600px;text-align:center;top:144.5px;line-height:20px;font-size:11px;color:#111;font-weight:bold;"><span style="transform:scaleX(0.85);transform-origin:50% 50%">영업소/지소</span></div>
<div class="tx" style="left:722.0px;width:600px;text-align:center;top:144.5px;line-height:20px;font-size:11px;color:#111;font-weight:bold;"><span style="transform:scaleX(0.85);transform-origin:50% 50%">모델</span></div>
<div class="tx" style="left:853.0px;width:600px;text-align:center;top:144.5px;line-height:20px;font-size:11px;color:#111;font-weight:bold;"><span style="transform:scaleX(0.85);transform-origin:50% 50%">개별</span></div>
<div class="tx" style="left:911.0px;width:600px;text-align:center;top:144.5px;line-height:20px;font-size:11px;color:#111;font-weight:bold;"><span style="transform:scaleX(0.85);transform-origin:50% 50%">집단</span></div>
<div class="tx" style="left:984.0px;width:600px;text-align:center;top:144.5px;line-height:20px;font-size:11px;color:#111;font-weight:bold;"><span style="transform:scaleX(0.85);transform-origin:50% 50%">합계</span></div>
<div style="left:745px;top:165.3px;width:582px;height:20.67px;background:#f5f5f0;border-bottom:1px solid #dedede;"></div>
<div style="left:920px;top:165.3px;width:1px;height:20.67px;background:#e2e2e2;"></div>
<div style="left:1124px;top:165.3px;width:1px;height:20.67px;background:#e2e2e2;"></div>
<div style="left:1182px;top:165.3px;width:1px;height:20.67px;background:#e2e2e2;"></div>
<div style="left:1240px;top:165.3px;width:1px;height:20.67px;background:#e2e2e2;"></div>
<div class="tx" style="left:533.2px;width:600px;text-align:center;top:164.3px;line-height:20px;font-size:11px;color:#222;font-weight:normal;"><span style="transform:scaleX(0.78);transform-origin:50% 50%">장군가스</span></div>
<div class="tx" style="left:723.2px;width:600px;text-align:center;top:164.3px;line-height:20px;font-size:11px;color:#222;font-weight:normal;"><span style="transform:scaleX(0.78);transform-origin:50% 50%">LoRa</span></div>
<div class="tx" style="left:854.2px;width:600px;text-align:center;top:164.8px;line-height:20px;font-size:12.5px;color:#222;font-weight:normal;"><span style="transform:scaleX(0.686);transform-origin:50% 50%">210</span></div>
<div class="tx" style="left:912.2px;width:600px;text-align:center;top:164.8px;line-height:20px;font-size:12.5px;color:#222;font-weight:normal;"><span style="transform:scaleX(0.686);transform-origin:50% 50%">56</span></div>
<div class="tx" style="left:985.2px;width:600px;text-align:center;top:164.8px;line-height:20px;font-size:12.5px;color:#222;font-weight:normal;"><span style="transform:scaleX(0.686);transform-origin:50% 50%">266</span></div>
<div style="left:745px;top:185.97px;width:582px;height:20.67px;background:#fff;border-bottom:1px solid #dedede;"></div>
<div style="left:920px;top:185.97px;width:1px;height:20.67px;background:#e2e2e2;"></div>
<div style="left:1124px;top:185.97px;width:1px;height:20.67px;background:#e2e2e2;"></div>
<div style="left:1182px;top:185.97px;width:1px;height:20.67px;background:#e2e2e2;"></div>
<div style="left:1240px;top:185.97px;width:1px;height:20.67px;background:#e2e2e2;"></div>
<div class="tx" style="left:533.2px;width:600px;text-align:center;top:184.97px;line-height:20px;font-size:11px;color:#222;font-weight:normal;"><span style="transform:scaleX(0.78);transform-origin:50% 50%">장군가스</span></div>
<div class="tx" style="left:723.2px;width:600px;text-align:center;top:184.97px;line-height:20px;font-size:11px;color:#222;font-weight:normal;"><span style="transform:scaleX(0.78);transform-origin:50% 50%">N-TYPE</span></div>
<div class="tx" style="left:854.2px;width:600px;text-align:center;top:185.47px;line-height:20px;font-size:12.5px;color:#222;font-weight:normal;"><span style="transform:scaleX(0.686);transform-origin:50% 50%">12</span></div>
<div class="tx" style="left:912.2px;width:600px;text-align:center;top:185.47px;line-height:20px;font-size:12.5px;color:#222;font-weight:normal;"><span style="transform:scaleX(0.686);transform-origin:50% 50%">0</span></div>
<div class="tx" style="left:985.2px;width:600px;text-align:center;top:185.47px;line-height:20px;font-size:12.5px;color:#222;font-weight:normal;"><span style="transform:scaleX(0.686);transform-origin:50% 50%">12</span></div>
<div style="left:745px;top:206.64px;width:582px;height:20.67px;background:#f5f5f0;border-bottom:1px solid #dedede;"></div>
<div style="left:920px;top:206.64px;width:1px;height:20.67px;background:#e2e2e2;"></div>
<div style="left:1124px;top:206.64px;width:1px;height:20.67px;background:#e2e2e2;"></div>
<div style="left:1182px;top:206.64px;width:1px;height:20.67px;background:#e2e2e2;"></div>
<div style="left:1240px;top:206.64px;width:1px;height:20.67px;background:#e2e2e2;"></div>
<div class="tx" style="left:533.2px;width:600px;text-align:center;top:205.64px;line-height:20px;font-size:11px;color:#111;font-weight:bold;"><span style="transform:scaleX(0.78);transform-origin:50% 50%">소계</span></div>
<div class="tx" style="left:723.2px;width:600px;text-align:center;top:205.64px;line-height:20px;font-size:11px;color:#111;font-weight:bold;"><span style="transform:scaleX(0.78);transform-origin:50% 50%"></span></div>
<div class="tx" style="left:854.2px;width:600px;text-align:center;top:206.14px;line-height:20px;font-size:12.5px;color:#111;font-weight:bold;"><span style="transform:scaleX(0.686);transform-origin:50% 50%">222</span></div>
<div class="tx" style="left:912.2px;width:600px;text-align:center;top:206.14px;line-height:20px;font-size:12.5px;color:#111;font-weight:bold;"><span style="transform:scaleX(0.686);transform-origin:50% 50%">56</span></div>
<div class="tx" style="left:985.2px;width:600px;text-align:center;top:206.14px;line-height:20px;font-size:12.5px;color:#111;font-weight:bold;"><span style="transform:scaleX(0.686);transform-origin:50% 50%">278</span></div>
<div style="left:745px;top:271px;width:582px;height:14px;background:#f1f1f1;"></div>
<div style="left:758px;top:272px;width:554px;height:12px;background:#c1c1c1;"></div>
<svg style="position:absolute;left:748px;top:273px" width="7" height="9"><path d="M5.5 0.5 L1.5 4.5 L5.5 8.5 Z" fill="#a3a3a3"/></svg>
<svg style="position:absolute;left:1318px;top:273px" width="7" height="9"><path d="M1.5 0.5 L5.5 4.5 L1.5 8.5 Z" fill="#505050"/></svg>
<div style="left:745px;top:285px;width:582px;height:21px;background:#eeeff3;border-top:1px solid #a5a5a5;"></div>
<div style="left:920px;top:286px;width:1px;height:20px;background:#c9c9c9;"></div>
<div style="left:1124px;top:286px;width:1px;height:20px;background:#c9c9c9;"></div>
<div style="left:1182px;top:286px;width:1px;height:20px;background:#c9c9c9;"></div>
<div style="left:1240px;top:286px;width:1px;height:20px;background:#c9c9c9;"></div>
<div class="tx" style="left:533.2px;width:600px;text-align:center;top:285.5px;line-height:20px;font-size:11px;color:#111;font-weight:bold;"><span style="transform:scaleX(0.78);transform-origin:50% 50%">합계</span></div>
<div class="tx" style="left:723.2px;width:600px;text-align:center;top:285.5px;line-height:20px;font-size:11px;color:#111;font-weight:bold;"><span style="transform:scaleX(0.78);transform-origin:50% 50%"></span></div>
<div class="tx" style="left:854.2px;width:600px;text-align:center;top:286.0px;line-height:20px;font-size:12.5px;color:#111;font-weight:bold;"><span style="transform:scaleX(0.686);transform-origin:50% 50%">222</span></div>
<div class="tx" style="left:912.2px;width:600px;text-align:center;top:286.0px;line-height:20px;font-size:12.5px;color:#111;font-weight:bold;"><span style="transform:scaleX(0.686);transform-origin:50% 50%">56</span></div>
<div class="tx" style="left:985.2px;width:600px;text-align:center;top:286.0px;line-height:20px;font-size:12.5px;color:#111;font-weight:bold;"><span style="transform:scaleX(0.686);transform-origin:50% 50%">278</span></div>
<div style="left:744px;top:306px;width:584px;height:2px;background:#1553a7;"></div>
<div style="left:1332px;top:119px;width:584px;height:189px;background:#fff;border:1px solid #a3c0dc;"></div>
<div style="left:1333px;top:120px;width:582px;height:24px;background:linear-gradient(#e0eefc,#d2e3f8);border-bottom:1px solid #a3bfdc;"></div>
<div class="tx" style="left:1336px;top:121px;line-height:20px;font-size:10px;color:#2a2a2a;font-weight:normal;"><span style="transform:scaleX(0.85);transform-origin:0 50%">공지사항</span></div>
<svg style="position:absolute;left:1903px;top:127px" width="8" height="10"><path d="M2.2 1.5 L5.6 5 L2.2 8.5" fill="none" stroke="#111" stroke-width="1.9"/></svg>
<div style="left:1332px;top:144px;width:584px;height:21px;background:linear-gradient(#d7e5f6,#c3d5ee);border-bottom:1px solid #98b1cc;"></div>
<div style="left:1391px;top:145px;width:1px;height:19px;background:#a9bdd6;"></div>
<div style="left:1781px;top:145px;width:1px;height:19px;background:#a9bdd6;"></div>
<div style="left:1898px;top:145px;width:1px;height:19px;background:#a9bdd6;"></div>
<div class="tx" style="left:1061.5px;width:600px;text-align:center;top:144.5px;line-height:20px;font-size:11px;color:#111;font-weight:bold;"><span style="transform:scaleX(0.85);transform-origin:50% 50%">No</span></div>
<div class="tx" style="left:1286.0px;width:600px;text-align:center;top:144.5px;line-height:20px;font-size:11px;color:#111;font-weight:bold;"><span style="transform:scaleX(0.85);transform-origin:50% 50%">제목</span></div>
<div class="tx" style="left:1539.5px;width:600px;text-align:center;top:144.5px;line-height:20px;font-size:11px;color:#111;font-weight:bold;"><span style="transform:scaleX(0.85);transform-origin:50% 50%">등록일</span></div>
<div class="tx" style="left:1607.0px;width:600px;text-align:center;top:144.5px;line-height:20px;font-size:11px;color:#111;font-weight:bold;"><span style="transform:scaleX(0.85);transform-origin:50% 50%"></span></div>
<div style="left:1333px;top:165.3px;width:565px;height:20.67px;background:#f5f5f0;border-bottom:1px solid #dedede;"></div>
<div style="left:1391px;top:165.3px;width:1px;height:20.67px;background:#e2e2e2;"></div>
<div style="left:1781px;top:165.3px;width:1px;height:20.67px;background:#e2e2e2;"></div>
<div class="tx" style="left:1062.5px;width:600px;text-align:center;top:164.3px;line-height:20px;font-size:12.5px;color:#222;font-weight:normal;"><span style="transform:scaleX(0.686);transform-origin:50% 50%">58</span></div>
<div class="tx" style="left:1395px;top:163.8px;line-height:20px;font-size:11px;color:#222;font-weight:normal;"><span style="transform:scaleX(0.83);transform-origin:0 50%">주식분할로 인한 주권 제출공고</span></div>
<div class="tx" style="left:1541px;width:600px;text-align:center;top:164.3px;line-height:20px;font-size:12.5px;color:#222;font-weight:normal;"><span style="transform:scaleX(0.686);transform-origin:50% 50%">2021-06-08</span></div>
<div style="left:1333px;top:185.97px;width:565px;height:20.67px;background:#fff;border-bottom:1px solid #dedede;"></div>
<div style="left:1391px;top:185.97px;width:1px;height:20.67px;background:#e2e2e2;"></div>
<div style="left:1781px;top:185.97px;width:1px;height:20.67px;background:#e2e2e2;"></div>
<div class="tx" style="left:1062.5px;width:600px;text-align:center;top:184.97px;line-height:20px;font-size:12.5px;color:#222;font-weight:normal;"><span style="transform:scaleX(0.686);transform-origin:50% 50%">57</span></div>
<div class="tx" style="left:1395px;top:184.47px;line-height:20px;font-size:11px;color:#222;font-weight:normal;"><span style="transform:scaleX(0.83);transform-origin:0 50%">관제웹과 모바일 앱 기능변경에 따른 서버작업 공지</span></div>
<div class="tx" style="left:1541px;width:600px;text-align:center;top:184.97px;line-height:20px;font-size:12.5px;color:#222;font-weight:normal;"><span style="transform:scaleX(0.686);transform-origin:50% 50%">2020-10-27</span></div>
<div style="left:1333px;top:206.64px;width:565px;height:20.67px;background:#f5f5f0;border-bottom:1px solid #dedede;"></div>
<div style="left:1391px;top:206.64px;width:1px;height:20.67px;background:#e2e2e2;"></div>
<div style="left:1781px;top:206.64px;width:1px;height:20.67px;background:#e2e2e2;"></div>
<div class="tx" style="left:1062.5px;width:600px;text-align:center;top:205.64px;line-height:20px;font-size:12.5px;color:#222;font-weight:normal;"><span style="transform:scaleX(0.686);transform-origin:50% 50%">56</span></div>
<div class="tx" style="left:1395px;top:205.14px;line-height:20px;font-size:11px;color:#222;font-weight:normal;"><span style="transform:scaleX(0.83);transform-origin:0 50%">원격검침기 신호누락에 따른 장애 공지</span></div>
<div class="tx" style="left:1541px;width:600px;text-align:center;top:205.64px;line-height:20px;font-size:12.5px;color:#222;font-weight:normal;"><span style="transform:scaleX(0.686);transform-origin:50% 50%">2020-10-08</span></div>
<div style="left:1333px;top:227.31px;width:565px;height:20.67px;background:#fff;border-bottom:1px solid #dedede;"></div>
<div style="left:1391px;top:227.31px;width:1px;height:20.67px;background:#e2e2e2;"></div>
<div style="left:1781px;top:227.31px;width:1px;height:20.67px;background:#e2e2e2;"></div>
<div class="tx" style="left:1062.5px;width:600px;text-align:center;top:226.31px;line-height:20px;font-size:12.5px;color:#222;font-weight:normal;"><span style="transform:scaleX(0.686);transform-origin:50% 50%">55</span></div>
<div class="tx" style="left:1395px;top:225.81px;line-height:20px;font-size:11px;color:#222;font-weight:normal;"><span style="transform:scaleX(0.83);transform-origin:0 50%">명절 연휴 휴무안내</span></div>
<div class="tx" style="left:1541px;width:600px;text-align:center;top:226.31px;line-height:20px;font-size:12.5px;color:#222;font-weight:normal;"><span style="transform:scaleX(0.686);transform-origin:50% 50%">2020-09-29</span></div>
<div style="left:1333px;top:247.98px;width:565px;height:20.67px;background:#f5f5f0;border-bottom:1px solid #dedede;"></div>
<div style="left:1391px;top:247.98px;width:1px;height:20.67px;background:#e2e2e2;"></div>
<div style="left:1781px;top:247.98px;width:1px;height:20.67px;background:#e2e2e2;"></div>
<div class="tx" style="left:1062.5px;width:600px;text-align:center;top:246.98px;line-height:20px;font-size:12.5px;color:#222;font-weight:normal;"><span style="transform:scaleX(0.686);transform-origin:50% 50%">54</span></div>
<div class="tx" style="left:1395px;top:246.48px;line-height:20px;font-size:11px;color:#222;font-weight:normal;"><span style="transform:scaleX(0.83);transform-origin:0 50%">서버 작업 공지</span></div>
<div class="tx" style="left:1541px;width:600px;text-align:center;top:246.98px;line-height:20px;font-size:12.5px;color:#222;font-weight:normal;"><span style="transform:scaleX(0.686);transform-origin:50% 50%">2020-08-26</span></div>
<div style="left:1333px;top:268.65px;width:565px;height:20.67px;background:#fff;border-bottom:1px solid #dedede;"></div>
<div style="left:1391px;top:268.65px;width:1px;height:20.67px;background:#e2e2e2;"></div>
<div style="left:1781px;top:268.65px;width:1px;height:20.67px;background:#e2e2e2;"></div>
<div class="tx" style="left:1062.5px;width:600px;text-align:center;top:267.65px;line-height:20px;font-size:12.5px;color:#222;font-weight:normal;"><span style="transform:scaleX(0.686);transform-origin:50% 50%">53</span></div>
<div class="tx" style="left:1395px;top:267.15px;line-height:20px;font-size:11px;color:#222;font-weight:normal;"><span style="transform:scaleX(0.83);transform-origin:0 50%">서버 작업 공지</span></div>
<div class="tx" style="left:1541px;width:600px;text-align:center;top:267.65px;line-height:20px;font-size:12.5px;color:#222;font-weight:normal;"><span style="transform:scaleX(0.686);transform-origin:50% 50%">2020-08-13</span></div>
<div style="left:1333px;top:289.32px;width:565px;height:16.68px;background:#f5f5f0;border-bottom:1px solid #dedede;"></div>
<div style="left:1391px;top:289.32px;width:1px;height:16.68px;background:#e2e2e2;"></div>
<div style="left:1781px;top:289.32px;width:1px;height:16.68px;background:#e2e2e2;"></div>
<div class="tx" style="left:1062.5px;width:600px;text-align:center;top:288.32px;line-height:20px;font-size:12.5px;color:#222;font-weight:normal;"><span style="transform:scaleX(0.686);transform-origin:50% 50%">52</span></div>
<div class="tx" style="left:1395px;top:287.82px;line-height:20px;font-size:11px;color:#222;font-weight:normal;"><span style="transform:scaleX(0.83);transform-origin:0 50%">지정 휴무일 안내 (하계휴무일)</span></div>
<div class="tx" style="left:1541px;width:600px;text-align:center;top:288.32px;line-height:20px;font-size:12.5px;color:#222;font-weight:normal;"><span style="transform:scaleX(0.686);transform-origin:50% 50%">2020-07-28</span></div>
<div style="left:1898px;top:165px;width:17px;height:141px;background:#fff;"></div>
<div style="left:1903px;top:166px;width:12px;height:140px;background:#f1f1f1;"></div>
<div style="left:1904px;top:180px;width:10px;height:15px;background:#c4c4c4;"></div>
<svg style="position:absolute;left:1905px;top:170px" width="9" height="6"><path d="M1 5 L4.5 1.5 L8 5 Z" fill="#b0b0b0"/></svg>
<svg style="position:absolute;left:1905px;top:294px" width="9" height="6"><path d="M1 1 L4.5 4.5 L8 1 Z" fill="#404040"/></svg>
<div style="left:1332px;top:306px;width:584px;height:2px;background:#1553a7;"></div>
<div style="left:155px;top:313px;width:1761px;height:164px;background:#fff;border:1px solid #a3c0dc;"></div>
<div style="left:156px;top:314px;width:1759px;height:24px;background:linear-gradient(#e0eefc,#d2e3f8);border-bottom:1px solid #a3bfdc;"></div>
<div class="tx" style="left:159px;top:315px;line-height:20px;font-size:10px;color:#2a2a2a;font-weight:normal;"><span style="transform:scaleX(0.85);transform-origin:0 50%">전일 기준 검침신호 분석</span></div>
<svg style="position:absolute;left:1902px;top:322px" width="10" height="8"><path d="M1.8 6 L4.9 3 L8 6" fill="none" stroke="#111" stroke-width="1.9"/></svg>
<div style="left:156px;top:338px;width:1759px;height:138px;background:#fff;"></div>
<div style="left:157px;top:339px;width:1318px;height:35px;background:#0033ff;"></div>
<div class="tx" style="left:516px;width:600px;text-align:center;top:346px;line-height:20px;font-size:15px;color:#fff;font-weight:normal;letter-spacing:0.6px;"><span style="transform:scaleX(1.0);transform-origin:50% 50%">[탱크] 전일 신호분석</span></div>
<div style="left:1476px;top:339px;width:438px;height:35px;background:#000080;"></div>
<div class="tx" style="left:1395px;width:600px;text-align:center;top:346px;line-height:20px;font-size:15px;color:#fff;font-weight:normal;letter-spacing:0.6px;"><span style="transform:scaleX(1.0);transform-origin:50% 50%">[용기] 전일 신호분석</span></div>
<div style="left:157px;top:376px;width:438px;height:100px;background:#2c77de;"></div>
<div class="tx" style="left:166px;top:381px;line-height:20px;font-size:12px;color:#fff;font-weight:bold;"><span style="transform:scaleX(0.88);transform-origin:0 50%">발신횟수 이상</span></div>
<svg style="position:absolute;left:349.00px;top:412px" width="12" height="36"><path d="M10 2.7 V32.5 H6.2 V8.3 Q5.2 9.3 0.2 9.5 V6.3 Q5.2 6.0 6.8 2.7 Z" fill="#fff"/></svg>
<svg style="position:absolute;left:370.30px;top:412px" width="12" height="36"><path d="M10 2.7 V32.5 H6.2 V8.3 Q5.2 9.3 0.2 9.5 V6.3 Q5.2 6.0 6.8 2.7 Z" fill="#fff"/></svg>
<svg style="position:absolute;left:391.60px;top:412px" width="12" height="36"><path d="M10 2.7 V32.5 H6.2 V8.3 Q5.2 9.3 0.2 9.5 V6.3 Q5.2 6.0 6.8 2.7 Z" fill="#fff"/></svg>
<div class="tx" style="left:-10px;width:600px;text-align:right;top:454px;line-height:20px;font-size:11px;color:#fff;font-weight:normal;"><span style="transform:scaleX(0.85);transform-origin:100% 50%">[미발신 단말기]</span></div>
<div style="left:597px;top:376px;width:438px;height:100px;background:#143a8f;"></div>
<div class="tx" style="left:606px;top:381px;line-height:20px;font-size:12px;color:#fff;font-weight:bold;"><span style="transform:scaleX(0.88);transform-origin:0 50%">단선 점검</span></div>
<svg style="position:absolute;left:791.50px;top:400px" width="60" height="60"><text x="3" y="45.4" font-family="Liberation Sans" font-size="45.5" fill="#fff" stroke="#143a8f" stroke-width="0.15" textLength="44.0" lengthAdjust="spacingAndGlyphs">32</text></svg>
<div class="tx" style="left:430px;width:600px;text-align:right;top:454px;line-height:20px;font-size:11px;color:#fff;font-weight:normal;"><span style="transform:scaleX(0.85);transform-origin:100% 50%">[미연결 신호가 들어온 단말기]</span></div>
<div style="left:1037px;top:376px;width:438px;height:100px;background:#808080;"></div>
<div class="tx" style="left:1046px;top:381px;line-height:20px;font-size:12px;color:#fff;font-weight:bold;"><span style="transform:scaleX(0.88);transform-origin:0 50%">게이지 점검</span></div>
<svg style="position:absolute;left:1249.50px;top:412px" width="12" height="36"><path d="M10 2.7 V32.5 H6.2 V8.3 Q5.2 9.3 0.2 9.5 V6.3 Q5.2 6.0 6.8 2.7 Z" fill="#fff"/></svg>
<div class="tx" style="left:870px;width:600px;text-align:right;top:454px;line-height:20px;font-size:11px;color:#fff;font-weight:normal;"><span style="transform:scaleX(0.85);transform-origin:100% 50%">[잔량이 3%이상 2회 증가한 단말기]</span></div>
<div style="left:1476px;top:376px;width:438px;height:100px;background:#2c77de;"></div>
<div class="tx" style="left:1485px;top:381px;line-height:20px;font-size:12px;color:#fff;font-weight:bold;"><span style="transform:scaleX(0.88);transform-origin:0 50%">발신횟수 이상</span></div>
<svg style="position:absolute;left:1670.00px;top:400px" width="60" height="60"><text x="3" y="45.4" font-family="Liberation Sans" font-size="45.5" fill="#fff" stroke="#2c77de" stroke-width="0.15" textLength="45.2" lengthAdjust="spacingAndGlyphs">20</text></svg>
<div class="tx" style="left:1309px;width:600px;text-align:right;top:454px;line-height:20px;font-size:11px;color:#fff;font-weight:normal;"><span style="transform:scaleX(0.85);transform-origin:100% 50%">[미발신 단말기]</span></div>
<div style="left:155px;top:481px;width:1279px;height:587px;background:#fff;border:1px solid #a3c0dc;"></div>
<div style="left:156px;top:482px;width:1277px;height:24px;background:linear-gradient(#e0eefc,#d2e3f8);border-bottom:1px solid #a3bfdc;"></div>
<div class="tx" style="left:159px;top:483px;line-height:20px;font-size:10px;color:#2a2a2a;font-weight:normal;"><span style="transform:scaleX(0.85);transform-origin:0 50%">대상 리스트</span></div>
<svg style="position:absolute;left:1420px;top:489px" width="8" height="10"><path d="M5.6 1.5 L2.2 5 L5.6 8.5" fill="none" stroke="#111" stroke-width="1.9"/></svg>
<div style="left:156px;top:506px;width:1277px;height:33px;background:#efefef;"></div>
<div style="left:1378px;top:513px;width:48px;height:18px;background:linear-gradient(#fbfbfb,#ececec);border:1px solid #888;border-radius:3px;"></div>
<div class="tx" style="left:1102px;width:600px;text-align:center;top:512px;line-height:20px;font-size:11px;color:#111;font-weight:normal;"><span style="transform:scaleX(0.8);transform-origin:50% 50%">단선제외</span></div>
<div style="left:156px;top:539px;width:1277px;height:22px;background:linear-gradient(#d7e5f6,#c3d5ee);border-bottom:1px solid #98b1cc;"></div>
<div style="left:155px;top:539px;width:1033px;height:22px;background:linear-gradient(#d7e5f6,#c3d5ee);border-bottom:1px solid #98b1cc;"></div>
<div style="left:182px;top:540px;width:1px;height:20px;background:#a9bdd6;"></div>
<div style="left:307px;top:540px;width:1px;height:20px;background:#a9bdd6;"></div>
<div style="left:513px;top:540px;width:1px;height:20px;background:#a9bdd6;"></div>
<div style="left:588px;top:540px;width:1px;height:20px;background:#a9bdd6;"></div>
<div style="left:663px;top:540px;width:1px;height:20px;background:#a9bdd6;"></div>
<div style="left:788px;top:540px;width:1px;height:20px;background:#a9bdd6;"></div>
<div style="left:888px;top:540px;width:1px;height:20px;background:#a9bdd6;"></div>
<div style="left:988px;top:540px;width:1px;height:20px;background:#a9bdd6;"></div>
<div style="left:1088px;top:540px;width:1px;height:20px;background:#a9bdd6;"></div>
<div class="tx" style="left:-131.5px;width:600px;text-align:center;top:536.5px;line-height:20px;font-size:11px;color:#111;font-weight:bold;"><span style="transform:scaleX(0.85);transform-origin:50% 50%">No</span></div>
<div class="tx" style="left:-55.5px;width:600px;text-align:center;top:539.5px;line-height:20px;font-size:11px;color:#111;font-weight:bold;"><span style="transform:scaleX(0.85);transform-origin:50% 50%">영업소/지소</span></div>
<div class="tx" style="left:110.0px;width:600px;text-align:center;top:539.5px;line-height:20px;font-size:11px;color:#111;font-weight:bold;"><span style="transform:scaleX(0.85);transform-origin:50% 50%">거래처명</span></div>
<div class="tx" style="left:250.5px;width:600px;text-align:center;top:539.5px;line-height:20px;font-size:11px;color:#111;font-weight:bold;"><span style="transform:scaleX(0.85);transform-origin:50% 50%">공급유형</span></div>
<div class="tx" style="left:325.5px;width:600px;text-align:center;top:539.5px;line-height:20px;font-size:11px;color:#111;font-weight:bold;"><span style="transform:scaleX(0.85);transform-origin:50% 50%">검침기ID</span></div>
<div class="tx" style="left:425.5px;width:600px;text-align:center;top:539.5px;line-height:20px;font-size:11px;color:#111;font-weight:bold;"><span style="transform:scaleX(0.85);transform-origin:50% 50%">수신일시</span></div>
<div class="tx" style="left:285px;width:600px;text-align:right;top:539.5px;line-height:20px;font-size:11px;color:#111;font-weight:bold;"><span style="transform:scaleX(0.85);transform-origin:100% 50%">잔량1(%)</span></div>
<div class="tx" style="left:385px;width:600px;text-align:right;top:539.5px;line-height:20px;font-size:11px;color:#111;font-weight:bold;"><span style="transform:scaleX(0.85);transform-origin:100% 50%">잔량2(%)</span></div>
<div class="tx" style="left:485px;width:600px;text-align:right;top:539.5px;line-height:20px;font-size:11px;color:#111;font-weight:bold;"><span style="transform:scaleX(0.85);transform-origin:100% 50%">사용량</span></div>
<div class="tx" style="left:838.0px;width:600px;text-align:center;top:539.5px;line-height:20px;font-size:11px;color:#111;font-weight:bold;"><span style="transform:scaleX(0.85);transform-origin:50% 50%">배터리</span></div>
<div style="left:1188px;top:540px;width:1px;height:20px;background:#a9bdd6;"></div>
<div style="left:156px;top:561px;width:1265px;height:484px;overflow:hidden;background:#fff;">
<div style="left:26px;top:0.0px;width:1006px;height:20.67px;background:#f5f5f0;border-bottom:1px solid #dedede;"></div>
<div style="left:0px;top:0.0px;width:26px;height:20.67px;background:#fff;border-bottom:1px solid #dedede;"></div>
<div style="left:26px;top:0.0px;width:1px;height:20.67px;background:#e0e0e0;"></div>
<div style="left:151px;top:0.0px;width:1px;height:20.67px;background:#e0e0e0;"></div>
<div style="left:357px;top:0.0px;width:1px;height:20.67px;background:#e0e0e0;"></div>
<div style="left:432px;top:0.0px;width:1px;height:20.67px;background:#e0e0e0;"></div>
<div style="left:507px;top:0.0px;width:1px;height:20.67px;background:#e0e0e0;"></div>
<div style="left:632px;top:0.0px;width:1px;height:20.67px;background:#e0e0e0;"></div>
<div style="left:732px;top:0.0px;width:1px;height:20.67px;background:#e0e0e0;"></div>
<div style="left:832px;top:0.0px;width:1px;height:20.67px;background:#e0e0e0;"></div>
<div style="left:932px;top:0.0px;width:1px;height:20.67px;background:#e0e0e0;"></div>
<div style="left:1032px;top:0.0px;width:1px;height:20.67px;background:#e0e0e0;"></div>
<div class="tx" style="left:-576.2px;width:600px;text-align:right;top:-2.5px;line-height:20px;font-size:12.5px;color:#222;font-weight:normal;"><span style="transform:scaleX(0.66);transform-origin:100% 50%">1</span></div>
<div class="tx" style="left:30px;top:-2.0px;line-height:20px;font-size:11px;color:#222;font-weight:normal;"><span style="transform:scaleX(0.83);transform-origin:0 50%">장군가스</span></div>
<div class="tx" style="left:155px;top:-2.0px;line-height:20px;font-size:11px;color:#222;font-weight:normal;"><span style="transform:scaleX(0.8);transform-origin:0 50%">J하우스(구산로4길27-8(우리)</span></div>
<div class="tx" style="left:95.69999999999999px;width:600px;text-align:center;top:-2.0px;line-height:20px;font-size:11px;color:#222;font-weight:normal;"><span style="transform:scaleX(0.83);transform-origin:50% 50%">개별공급</span></div>
<div class="tx" style="left:170.7px;width:600px;text-align:center;top:-1.5px;line-height:20px;font-size:12.5px;color:#222;font-weight:normal;"><span style="transform:scaleX(0.66);transform-origin:50% 50%">1000467</span></div>
<div style="left:568.7px;top:8px;width:4px;height:2px;background:#555;"></div>
<div style="left:26px;top:20.67px;width:1006px;height:20.67px;background:#fff;border-bottom:1px solid #dedede;"></div>
<div style="left:0px;top:20.67px;width:26px;height:20.67px;background:#fff;border-bottom:1px solid #dedede;"></div>
<div style="left:26px;top:20.67px;width:1px;height:20.67px;background:#e0e0e0;"></div>
<div style="left:151px;top:20.67px;width:1px;height:20.67px;background:#e0e0e0;"></div>
<div style="left:357px;top:20.67px;width:1px;height:20.67px;background:#e0e0e0;"></div>
<div style="left:432px;top:20.67px;width:1px;height:20.67px;background:#e0e0e0;"></div>
<div style="left:507px;top:20.67px;width:1px;height:20.67px;background:#e0e0e0;"></div>
<div style="left:632px;top:20.67px;width:1px;height:20.67px;background:#e0e0e0;"></div>
<div style="left:732px;top:20.67px;width:1px;height:20.67px;background:#e0e0e0;"></div>
<div style="left:832px;top:20.67px;width:1px;height:20.67px;background:#e0e0e0;"></div>
<div style="left:932px;top:20.67px;width:1px;height:20.67px;background:#e0e0e0;"></div>
<div style="left:1032px;top:20.67px;width:1px;height:20.67px;background:#e0e0e0;"></div>
<div class="tx" style="left:-576.2px;width:600px;text-align:right;top:18.17px;line-height:20px;font-size:12.5px;color:#222;font-weight:normal;"><span style="transform:scaleX(0.66);transform-origin:100% 50%">2</span></div>
<div class="tx" style="left:30px;top:18.67px;line-height:20px;font-size:11px;color:#222;font-weight:normal;"><span style="transform:scaleX(0.83);transform-origin:0 50%">장군가스</span></div>
<div class="tx" style="left:155px;top:18.67px;line-height:20px;font-size:11px;color:#222;font-weight:normal;"><span style="transform:scaleX(0.8);transform-origin:0 50%">구산서길76-31</span></div>
<div class="tx" style="left:95.69999999999999px;width:600px;text-align:center;top:18.67px;line-height:20px;font-size:11px;color:#222;font-weight:normal;"><span style="transform:scaleX(0.83);transform-origin:50% 50%">개별공급</span></div>
<div class="tx" style="left:170.7px;width:600px;text-align:center;top:19.17px;line-height:20px;font-size:12.5px;color:#222;font-weight:normal;"><span style="transform:scaleX(0.66);transform-origin:50% 50%">6000899</span></div>
<div style="left:568.7px;top:29px;width:4px;height:2px;background:#555;"></div>
<div style="left:26px;top:41.34px;width:1006px;height:20.67px;background:#f5f5f0;border-bottom:1px solid #dedede;"></div>
<div style="left:0px;top:41.34px;width:26px;height:20.67px;background:#fff;border-bottom:1px solid #dedede;"></div>
<div style="left:26px;top:41.34px;width:1px;height:20.67px;background:#e0e0e0;"></div>
<div style="left:151px;top:41.34px;width:1px;height:20.67px;background:#e0e0e0;"></div>
<div style="left:357px;top:41.34px;width:1px;height:20.67px;background:#e0e0e0;"></div>
<div style="left:432px;top:41.34px;width:1px;height:20.67px;background:#e0e0e0;"></div>
<div style="left:507px;top:41.34px;width:1px;height:20.67px;background:#e0e0e0;"></div>
<div style="left:632px;top:41.34px;width:1px;height:20.67px;background:#e0e0e0;"></div>
<div style="left:732px;top:41.34px;width:1px;height:20.67px;background:#e0e0e0;"></div>
<div style="left:832px;top:41.34px;width:1px;height:20.67px;background:#e0e0e0;"></div>
<div style="left:932px;top:41.34px;width:1px;height:20.67px;background:#e0e0e0;"></div>
<div style="left:1032px;top:41.34px;width:1px;height:20.67px;background:#e0e0e0;"></div>
<div class="tx" style="left:-576.2px;width:600px;text-align:right;top:38.84px;line-height:20px;font-size:12.5px;color:#222;font-weight:normal;"><span style="transform:scaleX(0.66);transform-origin:100% 50%">3</span></div>
<div class="tx" style="left:30px;top:39.34px;line-height:20px;font-size:11px;color:#222;font-weight:normal;"><span style="transform:scaleX(0.83);transform-origin:0 50%">장군가스</span></div>
<div class="tx" style="left:155px;top:39.34px;line-height:20px;font-size:11px;color:#222;font-weight:normal;"><span style="transform:scaleX(0.8);transform-origin:0 50%">남녕로40번길(LGU+) 4층</span></div>
<div class="tx" style="left:95.69999999999999px;width:600px;text-align:center;top:39.34px;line-height:20px;font-size:11px;color:#222;font-weight:normal;"><span style="transform:scaleX(0.83);transform-origin:50% 50%">집단공급</span></div>
<div class="tx" style="left:170.7px;width:600px;text-align:center;top:39.84px;line-height:20px;font-size:12.5px;color:#222;font-weight:normal;"><span style="transform:scaleX(0.66);transform-origin:50% 50%">1000311</span></div>
<div style="left:568.7px;top:50px;width:4px;height:2px;background:#555;"></div>
<div style="left:26px;top:62.01px;width:1006px;height:20.67px;background:#fff;border-bottom:1px solid #dedede;"></div>
<div style="left:0px;top:62.01px;width:26px;height:20.67px;background:#fff;border-bottom:1px solid #dedede;"></div>
<div style="left:26px;top:62.01px;width:1px;height:20.67px;background:#e0e0e0;"></div>
<div style="left:151px;top:62.01px;width:1px;height:20.67px;background:#e0e0e0;"></div>
<div style="left:357px;top:62.01px;width:1px;height:20.67px;background:#e0e0e0;"></div>
<div style="left:432px;top:62.01px;width:1px;height:20.67px;background:#e0e0e0;"></div>
<div style="left:507px;top:62.01px;width:1px;height:20.67px;background:#e0e0e0;"></div>
<div style="left:632px;top:62.01px;width:1px;height:20.67px;background:#e0e0e0;"></div>
<div style="left:732px;top:62.01px;width:1px;height:20.67px;background:#e0e0e0;"></div>
<div style="left:832px;top:62.01px;width:1px;height:20.67px;background:#e0e0e0;"></div>
<div style="left:932px;top:62.01px;width:1px;height:20.67px;background:#e0e0e0;"></div>
<div style="left:1032px;top:62.01px;width:1px;height:20.67px;background:#e0e0e0;"></div>
<div class="tx" style="left:-576.2px;width:600px;text-align:right;top:59.51px;line-height:20px;font-size:12.5px;color:#222;font-weight:normal;"><span style="transform:scaleX(0.66);transform-origin:100% 50%">4</span></div>
<div class="tx" style="left:30px;top:60.01px;line-height:20px;font-size:11px;color:#222;font-weight:normal;"><span style="transform:scaleX(0.83);transform-origin:0 50%">장군가스</span></div>
<div class="tx" style="left:155px;top:60.01px;line-height:20px;font-size:11px;color:#222;font-weight:normal;"><span style="transform:scaleX(0.8);transform-origin:0 50%">남안아파트(진성)</span></div>
<div class="tx" style="left:95.69999999999999px;width:600px;text-align:center;top:60.01px;line-height:20px;font-size:11px;color:#222;font-weight:normal;"><span style="transform:scaleX(0.83);transform-origin:50% 50%">개별공급</span></div>
<div class="tx" style="left:170.7px;width:600px;text-align:center;top:60.51px;line-height:20px;font-size:12.5px;color:#222;font-weight:normal;"><span style="transform:scaleX(0.66);transform-origin:50% 50%">1000480</span></div>
<div style="left:568.7px;top:70px;width:4px;height:2px;background:#555;"></div>
<div style="left:26px;top:82.68px;width:1006px;height:20.67px;background:#f5f5f0;border-bottom:1px solid #dedede;"></div>
<div style="left:0px;top:82.68px;width:26px;height:20.67px;background:#fff;border-bottom:1px solid #dedede;"></div>
<div style="left:26px;top:82.68px;width:1px;height:20.67px;background:#e0e0e0;"></div>
<div style="left:151px;top:82.68px;width:1px;height:20.67px;background:#e0e0e0;"></div>
<div style="left:357px;top:82.68px;width:1px;height:20.67px;background:#e0e0e0;"></div>
<div style="left:432px;top:82.68px;width:1px;height:20.67px;background:#e0e0e0;"></div>
<div style="left:507px;top:82.68px;width:1px;height:20.67px;background:#e0e0e0;"></div>
<div style="left:632px;top:82.68px;width:1px;height:20.67px;background:#e0e0e0;"></div>
<div style="left:732px;top:82.68px;width:1px;height:20.67px;background:#e0e0e0;"></div>
<div style="left:832px;top:82.68px;width:1px;height:20.67px;background:#e0e0e0;"></div>
<div style="left:932px;top:82.68px;width:1px;height:20.67px;background:#e0e0e0;"></div>
<div style="left:1032px;top:82.68px;width:1px;height:20.67px;background:#e0e0e0;"></div>
<div class="tx" style="left:-576.2px;width:600px;text-align:right;top:80.18px;line-height:20px;font-size:12.5px;color:#222;font-weight:normal;"><span style="transform:scaleX(0.66);transform-origin:100% 50%">5</span></div>
<div class="tx" style="left:30px;top:80.68px;line-height:20px;font-size:11px;color:#222;font-weight:normal;"><span style="transform:scaleX(0.83);transform-origin:0 50%">장군가스</span></div>
<div class="tx" style="left:155px;top:80.68px;line-height:20px;font-size:11px;color:#222;font-weight:normal;"><span style="transform:scaleX(0.8);transform-origin:0 50%">대정읍 무릉리 940-2</span></div>
<div class="tx" style="left:95.69999999999999px;width:600px;text-align:center;top:80.68px;line-height:20px;font-size:11px;color:#222;font-weight:normal;"><span style="transform:scaleX(0.83);transform-origin:50% 50%">개별공급</span></div>
<div class="tx" style="left:170.7px;width:600px;text-align:center;top:81.18px;line-height:20px;font-size:12.5px;color:#222;font-weight:normal;"><span style="transform:scaleX(0.66);transform-origin:50% 50%">6001877</span></div>
<div style="left:568.7px;top:91px;width:4px;height:2px;background:#555;"></div>
<div style="left:26px;top:103.35px;width:1006px;height:20.67px;background:#ffdf8f;border-bottom:1px solid #dedede;"></div>
<div style="left:0px;top:103.35px;width:26px;height:20.67px;background:#fff;border-bottom:1px solid #dedede;"></div>
<div style="left:26px;top:103.35px;width:1px;height:20.67px;background:#e0e0e0;"></div>
<div style="left:151px;top:103.35px;width:1px;height:20.67px;background:#e0e0e0;"></div>
<div style="left:357px;top:103.35px;width:1px;height:20.67px;background:#e0e0e0;"></div>
<div style="left:432px;top:103.35px;width:1px;height:20.67px;background:#e0e0e0;"></div>
<div style="left:507px;top:103.35px;width:1px;height:20.67px;background:#e0e0e0;"></div>
<div style="left:632px;top:103.35px;width:1px;height:20.67px;background:#e0e0e0;"></div>
<div style="left:732px;top:103.35px;width:1px;height:20.67px;background:#e0e0e0;"></div>
<div style="left:832px;top:103.35px;width:1px;height:20.67px;background:#e0e0e0;"></div>
<div style="left:932px;top:103.35px;width:1px;height:20.67px;background:#e0e0e0;"></div>
<div style="left:1032px;top:103.35px;width:1px;height:20.67px;background:#e0e0e0;"></div>
<div class="tx" style="left:-576.2px;width:600px;text-align:right;top:100.85px;line-height:20px;font-size:12.5px;color:#222;font-weight:normal;"><span style="transform:scaleX(0.66);transform-origin:100% 50%">6</span></div>
<div class="tx" style="left:30px;top:101.35px;line-height:20px;font-size:11px;color:#222;font-weight:normal;"><span style="transform:scaleX(0.83);transform-origin:0 50%">장군가스</span></div>
<div class="tx" style="left:155px;top:101.35px;line-height:20px;font-size:11px;color:#222;font-weight:normal;"><span style="transform:scaleX(0.8);transform-origin:0 50%">면스로</span></div>
<div class="tx" style="left:95.69999999999999px;width:600px;text-align:center;top:101.35px;line-height:20px;font-size:11px;color:#222;font-weight:normal;"><span style="transform:scaleX(0.83);transform-origin:50% 50%">개별공급</span></div>
<div class="tx" style="left:170.7px;width:600px;text-align:center;top:101.85px;line-height:20px;font-size:12.5px;color:#222;font-weight:normal;"><span style="transform:scaleX(0.66);transform-origin:50% 50%">6006722</span></div>
<div style="left:568.7px;top:112px;width:4px;height:2px;background:#555;"></div>
<div style="left:26px;top:124.02px;width:1006px;height:20.67px;background:#f5f5f0;border-bottom:1px solid #dedede;"></div>
<div style="left:0px;top:124.02px;width:26px;height:20.67px;background:#fff;border-bottom:1px solid #dedede;"></div>
<div style="left:26px;top:124.02px;width:1px;height:20.67px;background:#e0e0e0;"></div>
<div style="left:151px;top:124.02px;width:1px;height:20.67px;background:#e0e0e0;"></div>
<div style="left:357px;top:124.02px;width:1px;height:20.67px;background:#e0e0e0;"></div>
<div style="left:432px;top:124.02px;width:1px;height:20.67px;background:#e0e0e0;"></div>
<div style="left:507px;top:124.02px;width:1px;height:20.67px;background:#e0e0e0;"></div>
<div style="left:632px;top:124.02px;width:1px;height:20.67px;background:#e0e0e0;"></div>
<div style="left:732px;top:124.02px;width:1px;height:20.67px;background:#e0e0e0;"></div>
<div style="left:832px;top:124.02px;width:1px;height:20.67px;background:#e0e0e0;"></div>
<div style="left:932px;top:124.02px;width:1px;height:20.67px;background:#e0e0e0;"></div>
<div style="left:1032px;top:124.02px;width:1px;height:20.67px;background:#e0e0e0;"></div>
<div class="tx" style="left:-576.2px;width:600px;text-align:right;top:121.52px;line-height:20px;font-size:12.5px;color:#222;font-weight:normal;"><span style="transform:scaleX(0.66);transform-origin:100% 50%">7</span></div>
<div class="tx" style="left:30px;top:122.02px;line-height:20px;font-size:11px;color:#222;font-weight:normal;"><span style="transform:scaleX(0.83);transform-origin:0 50%">장군가스</span></div>
<div class="tx" style="left:155px;top:122.02px;line-height:20px;font-size:11px;color:#222;font-weight:normal;"><span style="transform:scaleX(0.8);transform-origin:0 50%">도두5길22 201호</span></div>
<div class="tx" style="left:95.69999999999999px;width:600px;text-align:center;top:122.02px;line-height:20px;font-size:11px;color:#222;font-weight:normal;"><span style="transform:scaleX(0.83);transform-origin:50% 50%">집단공급</span></div>
<div class="tx" style="left:170.7px;width:600px;text-align:center;top:122.52px;line-height:20px;font-size:12.5px;color:#222;font-weight:normal;"><span style="transform:scaleX(0.66);transform-origin:50% 50%">1000308</span></div>
<div style="left:568.7px;top:132px;width:4px;height:2px;background:#555;"></div>
<div style="left:26px;top:144.69px;width:1006px;height:20.67px;background:#fff;border-bottom:1px solid #dedede;"></div>
<div style="left:0px;top:144.69px;width:26px;height:20.67px;background:#fff;border-bottom:1px solid #dedede;"></div>
<div style="left:26px;top:144.69px;width:1px;height:20.67px;background:#e0e0e0;"></div>
<div style="left:151px;top:144.69px;width:1px;height:20.67px;background:#e0e0e0;"></div>
<div style="left:357px;top:144.69px;width:1px;height:20.67px;background:#e0e0e0;"></div>
<div style="left:432px;top:144.69px;width:1px;height:20.67px;background:#e0e0e0;"></div>
<div style="left:507px;top:144.69px;width:1px;height:20.67px;background:#e0e0e0;"></div>
<div style="left:632px;top:144.69px;width:1px;height:20.67px;background:#e0e0e0;"></div>
<div style="left:732px;top:144.69px;width:1px;height:20.67px;background:#e0e0e0;"></div>
<div style="left:832px;top:144.69px;width:1px;height:20.67px;background:#e0e0e0;"></div>
<div style="left:932px;top:144.69px;width:1px;height:20.67px;background:#e0e0e0;"></div>
<div style="left:1032px;top:144.69px;width:1px;height:20.67px;background:#e0e0e0;"></div>
<div class="tx" style="left:-576.2px;width:600px;text-align:right;top:142.19px;line-height:20px;font-size:12.5px;color:#222;font-weight:normal;"><span style="transform:scaleX(0.66);transform-origin:100% 50%">8</span></div>
<div class="tx" style="left:30px;top:142.69px;line-height:20px;font-size:11px;color:#222;font-weight:normal;"><span style="transform:scaleX(0.83);transform-origin:0 50%">장군가스</span></div>
<div class="tx" style="left:155px;top:142.69px;line-height:20px;font-size:11px;color:#222;font-weight:normal;"><span style="transform:scaleX(0.8);transform-origin:0 50%">라온빌</span></div>
<div class="tx" style="left:95.69999999999999px;width:600px;text-align:center;top:142.69px;line-height:20px;font-size:11px;color:#222;font-weight:normal;"><span style="transform:scaleX(0.83);transform-origin:50% 50%">개별공급</span></div>
<div class="tx" style="left:170.7px;width:600px;text-align:center;top:143.19px;line-height:20px;font-size:12.5px;color:#222;font-weight:normal;"><span style="transform:scaleX(0.66);transform-origin:50% 50%">6005015</span></div>
<div style="left:568.7px;top:153px;width:4px;height:2px;background:#555;"></div>
<div style="left:26px;top:165.36px;width:1006px;height:20.67px;background:#f5f5f0;border-bottom:1px solid #dedede;"></div>
<div style="left:0px;top:165.36px;width:26px;height:20.67px;background:#fff;border-bottom:1px solid #dedede;"></div>
<div style="left:26px;top:165.36px;width:1px;height:20.67px;background:#e0e0e0;"></div>
<div style="left:151px;top:165.36px;width:1px;height:20.67px;background:#e0e0e0;"></div>
<div style="left:357px;top:165.36px;width:1px;height:20.67px;background:#e0e0e0;"></div>
<div style="left:432px;top:165.36px;width:1px;height:20.67px;background:#e0e0e0;"></div>
<div style="left:507px;top:165.36px;width:1px;height:20.67px;background:#e0e0e0;"></div>
<div style="left:632px;top:165.36px;width:1px;height:20.67px;background:#e0e0e0;"></div>
<div style="left:732px;top:165.36px;width:1px;height:20.67px;background:#e0e0e0;"></div>
<div style="left:832px;top:165.36px;width:1px;height:20.67px;background:#e0e0e0;"></div>
<div style="left:932px;top:165.36px;width:1px;height:20.67px;background:#e0e0e0;"></div>
<div style="left:1032px;top:165.36px;width:1px;height:20.67px;background:#e0e0e0;"></div>
<div class="tx" style="left:-576.2px;width:600px;text-align:right;top:162.86px;line-height:20px;font-size:12.5px;color:#222;font-weight:normal;"><span style="transform:scaleX(0.66);transform-origin:100% 50%">9</span></div>
<div class="tx" style="left:30px;top:163.36px;line-height:20px;font-size:11px;color:#222;font-weight:normal;"><span style="transform:scaleX(0.83);transform-origin:0 50%">장군가스</span></div>
<div class="tx" style="left:155px;top:163.36px;line-height:20px;font-size:11px;color:#222;font-weight:normal;"><span style="transform:scaleX(0.8);transform-origin:0 50%">먹젠</span></div>
<div class="tx" style="left:95.69999999999999px;width:600px;text-align:center;top:163.36px;line-height:20px;font-size:11px;color:#222;font-weight:normal;"><span style="transform:scaleX(0.83);transform-origin:50% 50%">개별공급</span></div>
<div class="tx" style="left:170.7px;width:600px;text-align:center;top:163.86px;line-height:20px;font-size:12.5px;color:#222;font-weight:normal;"><span style="transform:scaleX(0.66);transform-origin:50% 50%">1000321</span></div>
<div style="left:568.7px;top:174px;width:4px;height:2px;background:#555;"></div>
<div style="left:26px;top:186.03px;width:1006px;height:20.67px;background:#fff;border-bottom:1px solid #dedede;"></div>
<div style="left:0px;top:186.03px;width:26px;height:20.67px;background:#fff;border-bottom:1px solid #dedede;"></div>
<div style="left:26px;top:186.03px;width:1px;height:20.67px;background:#e0e0e0;"></div>
<div style="left:151px;top:186.03px;width:1px;height:20.67px;background:#e0e0e0;"></div>
<div style="left:357px;top:186.03px;width:1px;height:20.67px;background:#e0e0e0;"></div>
<div style="left:432px;top:186.03px;width:1px;height:20.67px;background:#e0e0e0;"></div>
<div style="left:507px;top:186.03px;width:1px;height:20.67px;background:#e0e0e0;"></div>
<div style="left:632px;top:186.03px;width:1px;height:20.67px;background:#e0e0e0;"></div>
<div style="left:732px;top:186.03px;width:1px;height:20.67px;background:#e0e0e0;"></div>
<div style="left:832px;top:186.03px;width:1px;height:20.67px;background:#e0e0e0;"></div>
<div style="left:932px;top:186.03px;width:1px;height:20.67px;background:#e0e0e0;"></div>
<div style="left:1032px;top:186.03px;width:1px;height:20.67px;background:#e0e0e0;"></div>
<div class="tx" style="left:-576.2px;width:600px;text-align:right;top:183.53px;line-height:20px;font-size:12.5px;color:#222;font-weight:normal;"><span style="transform:scaleX(0.66);transform-origin:100% 50%">10</span></div>
<div class="tx" style="left:30px;top:184.03px;line-height:20px;font-size:11px;color:#222;font-weight:normal;"><span style="transform:scaleX(0.83);transform-origin:0 50%">장군가스</span></div>
<div class="tx" style="left:155px;top:184.03px;line-height:20px;font-size:11px;color:#222;font-weight:normal;"><span style="transform:scaleX(0.8);transform-origin:0 50%">면수2길 47(하도리, 상가)</span></div>
<div class="tx" style="left:95.69999999999999px;width:600px;text-align:center;top:184.03px;line-height:20px;font-size:11px;color:#222;font-weight:normal;"><span style="transform:scaleX(0.83);transform-origin:50% 50%">집단공급</span></div>
<div class="tx" style="left:170.7px;width:600px;text-align:center;top:184.53px;line-height:20px;font-size:12.5px;color:#222;font-weight:normal;"><span style="transform:scaleX(0.66);transform-origin:50% 50%">6004194</span></div>
<div style="left:568.7px;top:194px;width:4px;height:2px;background:#555;"></div>
<div style="left:26px;top:206.7px;width:1006px;height:20.67px;background:#f5f5f0;border-bottom:1px solid #dedede;"></div>
<div style="left:0px;top:206.7px;width:26px;height:20.67px;background:#fff;border-bottom:1px solid #dedede;"></div>
<div style="left:26px;top:206.7px;width:1px;height:20.67px;background:#e0e0e0;"></div>
<div style="left:151px;top:206.7px;width:1px;height:20.67px;background:#e0e0e0;"></div>
<div style="left:357px;top:206.7px;width:1px;height:20.67px;background:#e0e0e0;"></div>
<div style="left:432px;top:206.7px;width:1px;height:20.67px;background:#e0e0e0;"></div>
<div style="left:507px;top:206.7px;width:1px;height:20.67px;background:#e0e0e0;"></div>
<div style="left:632px;top:206.7px;width:1px;height:20.67px;background:#e0e0e0;"></div>
<div style="left:732px;top:206.7px;width:1px;height:20.67px;background:#e0e0e0;"></div>
<div style="left:832px;top:206.7px;width:1px;height:20.67px;background:#e0e0e0;"></div>
<div style="left:932px;top:206.7px;width:1px;height:20.67px;background:#e0e0e0;"></div>
<div style="left:1032px;top:206.7px;width:1px;height:20.67px;background:#e0e0e0;"></div>
<div class="tx" style="left:-576.2px;width:600px;text-align:right;top:204.2px;line-height:20px;font-size:12.5px;color:#222;font-weight:normal;"><span style="transform:scaleX(0.66);transform-origin:100% 50%">11</span></div>
<div class="tx" style="left:30px;top:204.7px;line-height:20px;font-size:11px;color:#222;font-weight:normal;"><span style="transform:scaleX(0.83);transform-origin:0 50%">장군가스</span></div>
<div class="tx" style="left:155px;top:204.7px;line-height:20px;font-size:11px;color:#222;font-weight:normal;"><span style="transform:scaleX(0.8);transform-origin:0 50%">보성리161 202호</span></div>
<div class="tx" style="left:95.69999999999999px;width:600px;text-align:center;top:204.7px;line-height:20px;font-size:11px;color:#222;font-weight:normal;"><span style="transform:scaleX(0.83);transform-origin:50% 50%">집단공급</span></div>
<div class="tx" style="left:170.7px;width:600px;text-align:center;top:205.2px;line-height:20px;font-size:12.5px;color:#222;font-weight:normal;"><span style="transform:scaleX(0.66);transform-origin:50% 50%">1000709</span></div>
<div style="left:568.7px;top:215px;width:4px;height:2px;background:#555;"></div>
<div style="left:26px;top:227.37px;width:1006px;height:20.67px;background:#fff;border-bottom:1px solid #dedede;"></div>
<div style="left:0px;top:227.37px;width:26px;height:20.67px;background:#fff;border-bottom:1px solid #dedede;"></div>
<div style="left:26px;top:227.37px;width:1px;height:20.67px;background:#e0e0e0;"></div>
<div style="left:151px;top:227.37px;width:1px;height:20.67px;background:#e0e0e0;"></div>
<div style="left:357px;top:227.37px;width:1px;height:20.67px;background:#e0e0e0;"></div>
<div style="left:432px;top:227.37px;width:1px;height:20.67px;background:#e0e0e0;"></div>
<div style="left:507px;top:227.37px;width:1px;height:20.67px;background:#e0e0e0;"></div>
<div style="left:632px;top:227.37px;width:1px;height:20.67px;background:#e0e0e0;"></div>
<div style="left:732px;top:227.37px;width:1px;height:20.67px;background:#e0e0e0;"></div>
<div style="left:832px;top:227.37px;width:1px;height:20.67px;background:#e0e0e0;"></div>
<div style="left:932px;top:227.37px;width:1px;height:20.67px;background:#e0e0e0;"></div>
<div style="left:1032px;top:227.37px;width:1px;height:20.67px;background:#e0e0e0;"></div>
<div class="tx" style="left:-576.2px;width:600px;text-align:right;top:224.87px;line-height:20px;font-size:12.5px;color:#222;font-weight:normal;"><span style="transform:scaleX(0.66);transform-origin:100% 50%">12</span></div>
<div class="tx" style="left:30px;top:225.37px;line-height:20px;font-size:11px;color:#222;font-weight:normal;"><span style="transform:scaleX(0.83);transform-origin:0 50%">장군가스</span></div>
<div class="tx" style="left:155px;top:225.37px;line-height:20px;font-size:11px;color:#222;font-weight:normal;"><span style="transform:scaleX(0.8);transform-origin:0 50%">샹그릴라 호텔</span></div>
<div class="tx" style="left:95.69999999999999px;width:600px;text-align:center;top:225.37px;line-height:20px;font-size:11px;color:#222;font-weight:normal;"><span style="transform:scaleX(0.83);transform-origin:50% 50%">개별공급</span></div>
<div class="tx" style="left:170.7px;width:600px;text-align:center;top:225.87px;line-height:20px;font-size:12.5px;color:#222;font-weight:normal;"><span style="transform:scaleX(0.66);transform-origin:50% 50%">6005014</span></div>
<div style="left:568.7px;top:236px;width:4px;height:2px;background:#555;"></div>
<div style="left:26px;top:248.04px;width:1006px;height:20.67px;background:#f5f5f0;border-bottom:1px solid #dedede;"></div>
<div style="left:0px;top:248.04px;width:26px;height:20.67px;background:#fff;border-bottom:1px solid #dedede;"></div>
<div style="left:26px;top:248.04px;width:1px;height:20.67px;background:#e0e0e0;"></div>
<div style="left:151px;top:248.04px;width:1px;height:20.67px;background:#e0e0e0;"></div>
<div style="left:357px;top:248.04px;width:1px;height:20.67px;background:#e0e0e0;"></div>
<div style="left:432px;top:248.04px;width:1px;height:20.67px;background:#e0e0e0;"></div>
<div style="left:507px;top:248.04px;width:1px;height:20.67px;background:#e0e0e0;"></div>
<div style="left:632px;top:248.04px;width:1px;height:20.67px;background:#e0e0e0;"></div>
<div style="left:732px;top:248.04px;width:1px;height:20.67px;background:#e0e0e0;"></div>
<div style="left:832px;top:248.04px;width:1px;height:20.67px;background:#e0e0e0;"></div>
<div style="left:932px;top:248.04px;width:1px;height:20.67px;background:#e0e0e0;"></div>
<div style="left:1032px;top:248.04px;width:1px;height:20.67px;background:#e0e0e0;"></div>
<div class="tx" style="left:-576.2px;width:600px;text-align:right;top:245.54px;line-height:20px;font-size:12.5px;color:#222;font-weight:normal;"><span style="transform:scaleX(0.66);transform-origin:100% 50%">13</span></div>
<div class="tx" style="left:30px;top:246.04px;line-height:20px;font-size:11px;color:#222;font-weight:normal;"><span style="transform:scaleX(0.83);transform-origin:0 50%">장군가스</span></div>
<div class="tx" style="left:155px;top:246.04px;line-height:20px;font-size:11px;color:#222;font-weight:normal;"><span style="transform:scaleX(0.8);transform-origin:0 50%">서광로28길 19 1층</span></div>
<div class="tx" style="left:95.69999999999999px;width:600px;text-align:center;top:246.04px;line-height:20px;font-size:11px;color:#222;font-weight:normal;"><span style="transform:scaleX(0.83);transform-origin:50% 50%">집단공급</span></div>
<div class="tx" style="left:170.7px;width:600px;text-align:center;top:246.54px;line-height:20px;font-size:12.5px;color:#222;font-weight:normal;"><span style="transform:scaleX(0.66);transform-origin:50% 50%">1000896</span></div>
<div style="left:568.7px;top:256px;width:4px;height:2px;background:#555;"></div>
<div style="left:26px;top:268.71px;width:1006px;height:20.67px;background:#fff;border-bottom:1px solid #dedede;"></div>
<div style="left:0px;top:268.71px;width:26px;height:20.67px;background:#fff;border-bottom:1px solid #dedede;"></div>
<div style="left:26px;top:268.71px;width:1px;height:20.67px;background:#e0e0e0;"></div>
<div style="left:151px;top:268.71px;width:1px;height:20.67px;background:#e0e0e0;"></div>
<div style="left:357px;top:268.71px;width:1px;height:20.67px;background:#e0e0e0;"></div>
<div style="left:432px;top:268.71px;width:1px;height:20.67px;background:#e0e0e0;"></div>
<div style="left:507px;top:268.71px;width:1px;height:20.67px;background:#e0e0e0;"></div>
<div style="left:632px;top:268.71px;width:1px;height:20.67px;background:#e0e0e0;"></div>
<div style="left:732px;top:268.71px;width:1px;height:20.67px;background:#e0e0e0;"></div>
<div style="left:832px;top:268.71px;width:1px;height:20.67px;background:#e0e0e0;"></div>
<div style="left:932px;top:268.71px;width:1px;height:20.67px;background:#e0e0e0;"></div>
<div style="left:1032px;top:268.71px;width:1px;height:20.67px;background:#e0e0e0;"></div>
<div class="tx" style="left:-576.2px;width:600px;text-align:right;top:266.21px;line-height:20px;font-size:12.5px;color:#222;font-weight:normal;"><span style="transform:scaleX(0.66);transform-origin:100% 50%">14</span></div>
<div class="tx" style="left:30px;top:266.71px;line-height:20px;font-size:11px;color:#222;font-weight:normal;"><span style="transform:scaleX(0.83);transform-origin:0 50%">장군가스</span></div>
<div class="tx" style="left:155px;top:266.71px;line-height:20px;font-size:11px;color:#222;font-weight:normal;"><span style="transform:scaleX(0.8);transform-origin:0 50%">서해안로301-1</span></div>
<div class="tx" style="left:95.69999999999999px;width:600px;text-align:center;top:266.71px;line-height:20px;font-size:11px;color:#222;font-weight:normal;"><span style="transform:scaleX(0.83);transform-origin:50% 50%">개별공급</span></div>
<div class="tx" style="left:170.7px;width:600px;text-align:center;top:267.21px;line-height:20px;font-size:12.5px;color:#222;font-weight:normal;"><span style="transform:scaleX(0.66);transform-origin:50% 50%">1002479</span></div>
<div style="left:568.7px;top:277px;width:4px;height:2px;background:#555;"></div>
<div style="left:26px;top:289.38px;width:1006px;height:20.67px;background:#f5f5f0;border-bottom:1px solid #dedede;"></div>
<div style="left:0px;top:289.38px;width:26px;height:20.67px;background:#fff;border-bottom:1px solid #dedede;"></div>
<div style="left:26px;top:289.38px;width:1px;height:20.67px;background:#e0e0e0;"></div>
<div style="left:151px;top:289.38px;width:1px;height:20.67px;background:#e0e0e0;"></div>
<div style="left:357px;top:289.38px;width:1px;height:20.67px;background:#e0e0e0;"></div>
<div style="left:432px;top:289.38px;width:1px;height:20.67px;background:#e0e0e0;"></div>
<div style="left:507px;top:289.38px;width:1px;height:20.67px;background:#e0e0e0;"></div>
<div style="left:632px;top:289.38px;width:1px;height:20.67px;background:#e0e0e0;"></div>
<div style="left:732px;top:289.38px;width:1px;height:20.67px;background:#e0e0e0;"></div>
<div style="left:832px;top:289.38px;width:1px;height:20.67px;background:#e0e0e0;"></div>
<div style="left:932px;top:289.38px;width:1px;height:20.67px;background:#e0e0e0;"></div>
<div style="left:1032px;top:289.38px;width:1px;height:20.67px;background:#e0e0e0;"></div>
<div class="tx" style="left:-576.2px;width:600px;text-align:right;top:286.88px;line-height:20px;font-size:12.5px;color:#222;font-weight:normal;"><span style="transform:scaleX(0.66);transform-origin:100% 50%">15</span></div>
<div class="tx" style="left:30px;top:287.38px;line-height:20px;font-size:11px;color:#222;font-weight:normal;"><span style="transform:scaleX(0.83);transform-origin:0 50%">장군가스</span></div>
<div class="tx" style="left:155px;top:287.38px;line-height:20px;font-size:11px;color:#222;font-weight:normal;"><span style="transform:scaleX(0.8);transform-origin:0 50%">서희건재 (하광로 533)</span></div>
<div class="tx" style="left:95.69999999999999px;width:600px;text-align:center;top:287.38px;line-height:20px;font-size:11px;color:#222;font-weight:normal;"><span style="transform:scaleX(0.83);transform-origin:50% 50%">개별공급</span></div>
<div class="tx" style="left:170.7px;width:600px;text-align:center;top:287.88px;line-height:20px;font-size:12.5px;color:#222;font-weight:normal;"><span style="transform:scaleX(0.66);transform-origin:50% 50%">1000447</span></div>
<div class="tx" style="left:270.70000000000005px;width:600px;text-align:center;top:287.88px;line-height:20px;font-size:12.5px;color:#222;font-weight:normal;"><span style="transform:scaleX(0.66);transform-origin:50% 50%">2024-10-15</span></div>
<div class="tx" style="left:130px;width:600px;text-align:right;top:287.88px;line-height:20px;font-size:12.5px;color:#222;font-weight:normal;"><span style="transform:scaleX(0.66);transform-origin:100% 50%">57,9</span></div>
<div class="tx" style="left:230px;width:600px;text-align:right;top:287.38px;line-height:20px;font-size:11px;color:#222;font-weight:normal;"><span style="transform:scaleX(0.78);transform-origin:100% 50%">FAIL</span></div>
<div class="tx" style="left:330px;width:600px;text-align:right;top:287.88px;line-height:20px;font-size:12.5px;color:#222;font-weight:normal;"><span style="transform:scaleX(0.66);transform-origin:100% 50%">93,02</span></div>
<div class="tx" style="left:683.2px;width:600px;text-align:center;top:287.38px;line-height:20px;font-size:11px;color:#222;font-weight:normal;"><span style="transform:scaleX(0.83);transform-origin:50% 50%">양호</span></div>
<div style="left:26px;top:310.05px;width:1006px;height:20.67px;background:#fff;border-bottom:1px solid #dedede;"></div>
<div style="left:0px;top:310.05px;width:26px;height:20.67px;background:#fff;border-bottom:1px solid #dedede;"></div>
<div style="left:26px;top:310.05px;width:1px;height:20.67px;background:#e0e0e0;"></div>
<div style="left:151px;top:310.05px;width:1px;height:20.67px;background:#e0e0e0;"></div>
<div style="left:357px;top:310.05px;width:1px;height:20.67px;background:#e0e0e0;"></div>
<div style="left:432px;top:310.05px;width:1px;height:20.67px;background:#e0e0e0;"></div>
<div style="left:507px;top:310.05px;width:1px;height:20.67px;background:#e0e0e0;"></div>
<div style="left:632px;top:310.05px;width:1px;height:20.67px;background:#e0e0e0;"></div>
<div style="left:732px;top:310.05px;width:1px;height:20.67px;background:#e0e0e0;"></div>
<div style="left:832px;top:310.05px;width:1px;height:20.67px;background:#e0e0e0;"></div>
<div style="left:932px;top:310.05px;width:1px;height:20.67px;background:#e0e0e0;"></div>
<div style="left:1032px;top:310.05px;width:1px;height:20.67px;background:#e0e0e0;"></div>
<div class="tx" style="left:-576.2px;width:600px;text-align:right;top:307.55px;line-height:20px;font-size:12.5px;color:#222;font-weight:normal;"><span style="transform:scaleX(0.66);transform-origin:100% 50%">16</span></div>
<div class="tx" style="left:30px;top:308.05px;line-height:20px;font-size:11px;color:#222;font-weight:normal;"><span style="transform:scaleX(0.83);transform-origin:0 50%">장군가스</span></div>
<div class="tx" style="left:155px;top:308.05px;line-height:20px;font-size:11px;color:#222;font-weight:normal;"><span style="transform:scaleX(0.8);transform-origin:0 50%">섬나라 오메기</span></div>
<div class="tx" style="left:95.69999999999999px;width:600px;text-align:center;top:308.05px;line-height:20px;font-size:11px;color:#222;font-weight:normal;"><span style="transform:scaleX(0.83);transform-origin:50% 50%">개별공급</span></div>
<div class="tx" style="left:170.7px;width:600px;text-align:center;top:308.55px;line-height:20px;font-size:12.5px;color:#222;font-weight:normal;"><span style="transform:scaleX(0.66);transform-origin:50% 50%">6001835</span></div>
<div style="left:568.7px;top:318px;width:4px;height:2px;background:#555;"></div>
<div style="left:26px;top:330.72px;width:1006px;height:20.67px;background:#f5f5f0;border-bottom:1px solid #dedede;"></div>
<div style="left:0px;top:330.72px;width:26px;height:20.67px;background:#fff;border-bottom:1px solid #dedede;"></div>
<div style="left:26px;top:330.72px;width:1px;height:20.67px;background:#e0e0e0;"></div>
<div style="left:151px;top:330.72px;width:1px;height:20.67px;background:#e0e0e0;"></div>
<div style="left:357px;top:330.72px;width:1px;height:20.67px;background:#e0e0e0;"></div>
<div style="left:432px;top:330.72px;width:1px;height:20.67px;background:#e0e0e0;"></div>
<div style="left:507px;top:330.72px;width:1px;height:20.67px;background:#e0e0e0;"></div>
<div style="left:632px;top:330.72px;width:1px;height:20.67px;background:#e0e0e0;"></div>
<div style="left:732px;top:330.72px;width:1px;height:20.67px;background:#e0e0e0;"></div>
<div style="left:832px;top:330.72px;width:1px;height:20.67px;background:#e0e0e0;"></div>
<div style="left:932px;top:330.72px;width:1px;height:20.67px;background:#e0e0e0;"></div>
<div style="left:1032px;top:330.72px;width:1px;height:20.67px;background:#e0e0e0;"></div>
<div class="tx" style="left:-576.2px;width:600px;text-align:right;top:328.22px;line-height:20px;font-size:12.5px;color:#222;font-weight:normal;"><span style="transform:scaleX(0.66);transform-origin:100% 50%">17</span></div>
<div class="tx" style="left:30px;top:328.72px;line-height:20px;font-size:11px;color:#222;font-weight:normal;"><span style="transform:scaleX(0.83);transform-origin:0 50%">장군가스</span></div>
<div class="tx" style="left:155px;top:328.72px;line-height:20px;font-size:11px;color:#222;font-weight:normal;"><span style="transform:scaleX(0.8);transform-origin:0 50%">송당서2길 5-17</span></div>
<div class="tx" style="left:95.69999999999999px;width:600px;text-align:center;top:328.72px;line-height:20px;font-size:11px;color:#222;font-weight:normal;"><span style="transform:scaleX(0.83);transform-origin:50% 50%">개별공급</span></div>
<div class="tx" style="left:170.7px;width:600px;text-align:center;top:329.22px;line-height:20px;font-size:12.5px;color:#222;font-weight:normal;"><span style="transform:scaleX(0.66);transform-origin:50% 50%">1002287</span></div>
<div style="left:568.7px;top:339px;width:4px;height:2px;background:#555;"></div>
<div style="left:26px;top:351.39px;width:1006px;height:20.67px;background:#fff;border-bottom:1px solid #dedede;"></div>
<div style="left:0px;top:351.39px;width:26px;height:20.67px;background:#fff;border-bottom:1px solid #dedede;"></div>
<div style="left:26px;top:351.39px;width:1px;height:20.67px;background:#e0e0e0;"></div>
<div style="left:151px;top:351.39px;width:1px;height:20.67px;background:#e0e0e0;"></div>
<div style="left:357px;top:351.39px;width:1px;height:20.67px;background:#e0e0e0;"></div>
<div style="left:432px;top:351.39px;width:1px;height:20.67px;background:#e0e0e0;"></div>
<div style="left:507px;top:351.39px;width:1px;height:20.67px;background:#e0e0e0;"></div>
<div style="left:632px;top:351.39px;width:1px;height:20.67px;background:#e0e0e0;"></div>
<div style="left:732px;top:351.39px;width:1px;height:20.67px;background:#e0e0e0;"></div>
<div style="left:832px;top:351.39px;width:1px;height:20.67px;background:#e0e0e0;"></div>
<div style="left:932px;top:351.39px;width:1px;height:20.67px;background:#e0e0e0;"></div>
<div style="left:1032px;top:351.39px;width:1px;height:20.67px;background:#e0e0e0;"></div>
<div class="tx" style="left:-576.2px;width:600px;text-align:right;top:348.89px;line-height:20px;font-size:12.5px;color:#222;font-weight:normal;"><span style="transform:scaleX(0.66);transform-origin:100% 50%">18</span></div>
<div class="tx" style="left:30px;top:349.39px;line-height:20px;font-size:11px;color:#222;font-weight:normal;"><span style="transform:scaleX(0.83);transform-origin:0 50%">장군가스</span></div>
<div class="tx" style="left:155px;top:349.39px;line-height:20px;font-size:11px;color:#222;font-weight:normal;"><span style="transform:scaleX(0.8);transform-origin:0 50%">송창돈(아란9길46)우리</span></div>
<div class="tx" style="left:95.69999999999999px;width:600px;text-align:center;top:349.39px;line-height:20px;font-size:11px;color:#222;font-weight:normal;"><span style="transform:scaleX(0.83);transform-origin:50% 50%">개별공급</span></div>
<div class="tx" style="left:170.7px;width:600px;text-align:center;top:349.89px;line-height:20px;font-size:12.5px;color:#222;font-weight:normal;"><span style="transform:scaleX(0.66);transform-origin:50% 50%">1000471</span></div>
<div style="left:568.7px;top:360px;width:4px;height:2px;background:#555;"></div>
<div style="left:26px;top:372.06px;width:1006px;height:20.67px;background:#f5f5f0;border-bottom:1px solid #dedede;"></div>
<div style="left:0px;top:372.06px;width:26px;height:20.67px;background:#fff;border-bottom:1px solid #dedede;"></div>
<div style="left:26px;top:372.06px;width:1px;height:20.67px;background:#e0e0e0;"></div>
<div style="left:151px;top:372.06px;width:1px;height:20.67px;background:#e0e0e0;"></div>
<div style="left:357px;top:372.06px;width:1px;height:20.67px;background:#e0e0e0;"></div>
<div style="left:432px;top:372.06px;width:1px;height:20.67px;background:#e0e0e0;"></div>
<div style="left:507px;top:372.06px;width:1px;height:20.67px;background:#e0e0e0;"></div>
<div style="left:632px;top:372.06px;width:1px;height:20.67px;background:#e0e0e0;"></div>
<div style="left:732px;top:372.06px;width:1px;height:20.67px;background:#e0e0e0;"></div>
<div style="left:832px;top:372.06px;width:1px;height:20.67px;background:#e0e0e0;"></div>
<div style="left:932px;top:372.06px;width:1px;height:20.67px;background:#e0e0e0;"></div>
<div style="left:1032px;top:372.06px;width:1px;height:20.67px;background:#e0e0e0;"></div>
<div class="tx" style="left:-576.2px;width:600px;text-align:right;top:369.56px;line-height:20px;font-size:12.5px;color:#222;font-weight:normal;"><span style="transform:scaleX(0.66);transform-origin:100% 50%">19</span></div>
<div class="tx" style="left:30px;top:370.06px;line-height:20px;font-size:11px;color:#222;font-weight:normal;"><span style="transform:scaleX(0.83);transform-origin:0 50%">장군가스</span></div>
<div class="tx" style="left:155px;top:370.06px;line-height:20px;font-size:11px;color:#222;font-weight:normal;"><span style="transform:scaleX(0.8);transform-origin:0 50%">아라하늘 (인다4길 15-6 (우리)</span></div>
<div class="tx" style="left:95.69999999999999px;width:600px;text-align:center;top:370.06px;line-height:20px;font-size:11px;color:#222;font-weight:normal;"><span style="transform:scaleX(0.83);transform-origin:50% 50%">개별공급</span></div>
<div class="tx" style="left:170.7px;width:600px;text-align:center;top:370.56px;line-height:20px;font-size:12.5px;color:#222;font-weight:normal;"><span style="transform:scaleX(0.66);transform-origin:50% 50%">1000456</span></div>
<div style="left:568.7px;top:380px;width:4px;height:2px;background:#555;"></div>
<div style="left:26px;top:392.73px;width:1006px;height:20.67px;background:#fff;border-bottom:1px solid #dedede;"></div>
<div style="left:0px;top:392.73px;width:26px;height:20.67px;background:#fff;border-bottom:1px solid #dedede;"></div>
<div style="left:26px;top:392.73px;width:1px;height:20.67px;background:#e0e0e0;"></div>
<div style="left:151px;top:392.73px;width:1px;height:20.67px;background:#e0e0e0;"></div>
<div style="left:357px;top:392.73px;width:1px;height:20.67px;background:#e0e0e0;"></div>
<div style="left:432px;top:392.73px;width:1px;height:20.67px;background:#e0e0e0;"></div>
<div style="left:507px;top:392.73px;width:1px;height:20.67px;background:#e0e0e0;"></div>
<div style="left:632px;top:392.73px;width:1px;height:20.67px;background:#e0e0e0;"></div>
<div style="left:732px;top:392.73px;width:1px;height:20.67px;background:#e0e0e0;"></div>
<div style="left:832px;top:392.73px;width:1px;height:20.67px;background:#e0e0e0;"></div>
<div style="left:932px;top:392.73px;width:1px;height:20.67px;background:#e0e0e0;"></div>
<div style="left:1032px;top:392.73px;width:1px;height:20.67px;background:#e0e0e0;"></div>
<div class="tx" style="left:-576.2px;width:600px;text-align:right;top:390.23px;line-height:20px;font-size:12.5px;color:#222;font-weight:normal;"><span style="transform:scaleX(0.66);transform-origin:100% 50%">20</span></div>
<div class="tx" style="left:30px;top:390.73px;line-height:20px;font-size:11px;color:#222;font-weight:normal;"><span style="transform:scaleX(0.83);transform-origin:0 50%">장군가스</span></div>
<div class="tx" style="left:155px;top:390.73px;line-height:20px;font-size:11px;color:#222;font-weight:normal;"><span style="transform:scaleX(0.8);transform-origin:0 50%">어반하우스 101호</span></div>
<div class="tx" style="left:95.69999999999999px;width:600px;text-align:center;top:390.73px;line-height:20px;font-size:11px;color:#222;font-weight:normal;"><span style="transform:scaleX(0.83);transform-origin:50% 50%">집단공급</span></div>
<div class="tx" style="left:170.7px;width:600px;text-align:center;top:391.23px;line-height:20px;font-size:12.5px;color:#222;font-weight:normal;"><span style="transform:scaleX(0.66);transform-origin:50% 50%">1000334</span></div>
<div style="left:568.7px;top:401px;width:4px;height:2px;background:#555;"></div>
<div style="left:26px;top:413.4px;width:1006px;height:20.67px;background:#f5f5f0;border-bottom:1px solid #dedede;"></div>
<div style="left:0px;top:413.4px;width:26px;height:20.67px;background:#fff;border-bottom:1px solid #dedede;"></div>
<div style="left:26px;top:413.4px;width:1px;height:20.67px;background:#e0e0e0;"></div>
<div style="left:151px;top:413.4px;width:1px;height:20.67px;background:#e0e0e0;"></div>
<div style="left:357px;top:413.4px;width:1px;height:20.67px;background:#e0e0e0;"></div>
<div style="left:432px;top:413.4px;width:1px;height:20.67px;background:#e0e0e0;"></div>
<div style="left:507px;top:413.4px;width:1px;height:20.67px;background:#e0e0e0;"></div>
<div style="left:632px;top:413.4px;width:1px;height:20.67px;background:#e0e0e0;"></div>
<div style="left:732px;top:413.4px;width:1px;height:20.67px;background:#e0e0e0;"></div>
<div style="left:832px;top:413.4px;width:1px;height:20.67px;background:#e0e0e0;"></div>
<div style="left:932px;top:413.4px;width:1px;height:20.67px;background:#e0e0e0;"></div>
<div style="left:1032px;top:413.4px;width:1px;height:20.67px;background:#e0e0e0;"></div>
<div class="tx" style="left:-576.2px;width:600px;text-align:right;top:410.9px;line-height:20px;font-size:12.5px;color:#222;font-weight:normal;"><span style="transform:scaleX(0.66);transform-origin:100% 50%">21</span></div>
<div class="tx" style="left:30px;top:411.4px;line-height:20px;font-size:11px;color:#222;font-weight:normal;"><span style="transform:scaleX(0.83);transform-origin:0 50%">장군가스</span></div>
<div class="tx" style="left:155px;top:411.4px;line-height:20px;font-size:11px;color:#222;font-weight:normal;"><span style="transform:scaleX(0.8);transform-origin:0 50%">엘루체(중앙로 258-1)</span></div>
<div class="tx" style="left:95.69999999999999px;width:600px;text-align:center;top:411.4px;line-height:20px;font-size:11px;color:#222;font-weight:normal;"><span style="transform:scaleX(0.83);transform-origin:50% 50%">개별공급</span></div>
<div class="tx" style="left:170.7px;width:600px;text-align:center;top:411.9px;line-height:20px;font-size:12.5px;color:#222;font-weight:normal;"><span style="transform:scaleX(0.66);transform-origin:50% 50%">1000472</span></div>
<div style="left:568.7px;top:422px;width:4px;height:2px;background:#555;"></div>
<div style="left:26px;top:434.07px;width:1006px;height:20.67px;background:#fff;border-bottom:1px solid #dedede;"></div>
<div style="left:0px;top:434.07px;width:26px;height:20.67px;background:#fff;border-bottom:1px solid #dedede;"></div>
<div style="left:26px;top:434.07px;width:1px;height:20.67px;background:#e0e0e0;"></div>
<div style="left:151px;top:434.07px;width:1px;height:20.67px;background:#e0e0e0;"></div>
<div style="left:357px;top:434.07px;width:1px;height:20.67px;background:#e0e0e0;"></div>
<div style="left:432px;top:434.07px;width:1px;height:20.67px;background:#e0e0e0;"></div>
<div style="left:507px;top:434.07px;width:1px;height:20.67px;background:#e0e0e0;"></div>
<div style="left:632px;top:434.07px;width:1px;height:20.67px;background:#e0e0e0;"></div>
<div style="left:732px;top:434.07px;width:1px;height:20.67px;background:#e0e0e0;"></div>
<div style="left:832px;top:434.07px;width:1px;height:20.67px;background:#e0e0e0;"></div>
<div style="left:932px;top:434.07px;width:1px;height:20.67px;background:#e0e0e0;"></div>
<div style="left:1032px;top:434.07px;width:1px;height:20.67px;background:#e0e0e0;"></div>
<div class="tx" style="left:-576.2px;width:600px;text-align:right;top:431.57px;line-height:20px;font-size:12.5px;color:#222;font-weight:normal;"><span style="transform:scaleX(0.66);transform-origin:100% 50%">22</span></div>
<div class="tx" style="left:30px;top:432.07px;line-height:20px;font-size:11px;color:#222;font-weight:normal;"><span style="transform:scaleX(0.83);transform-origin:0 50%">장군가스</span></div>
<div class="tx" style="left:155px;top:432.07px;line-height:20px;font-size:11px;color:#222;font-weight:normal;"><span style="transform:scaleX(0.8);transform-origin:0 50%">외도약국(우정로70)</span></div>
<div class="tx" style="left:95.69999999999999px;width:600px;text-align:center;top:432.07px;line-height:20px;font-size:11px;color:#222;font-weight:normal;"><span style="transform:scaleX(0.83);transform-origin:50% 50%">개별공급</span></div>
<div class="tx" style="left:170.7px;width:600px;text-align:center;top:432.57px;line-height:20px;font-size:12.5px;color:#222;font-weight:normal;"><span style="transform:scaleX(0.66);transform-origin:50% 50%">6000605</span></div>
<div style="left:568.7px;top:442px;width:4px;height:2px;background:#555;"></div>
<div style="left:26px;top:454.74px;width:1006px;height:20.67px;background:#f5f5f0;border-bottom:1px solid #dedede;"></div>
<div style="left:0px;top:454.74px;width:26px;height:20.67px;background:#fff;border-bottom:1px solid #dedede;"></div>
<div style="left:26px;top:454.74px;width:1px;height:20.67px;background:#e0e0e0;"></div>
<div style="left:151px;top:454.74px;width:1px;height:20.67px;background:#e0e0e0;"></div>
<div style="left:357px;top:454.74px;width:1px;height:20.67px;background:#e0e0e0;"></div>
<div style="left:432px;top:454.74px;width:1px;height:20.67px;background:#e0e0e0;"></div>
<div style="left:507px;top:454.74px;width:1px;height:20.67px;background:#e0e0e0;"></div>
<div style="left:632px;top:454.74px;width:1px;height:20.67px;background:#e0e0e0;"></div>
<div style="left:732px;top:454.74px;width:1px;height:20.67px;background:#e0e0e0;"></div>
<div style="left:832px;top:454.74px;width:1px;height:20.67px;background:#e0e0e0;"></div>
<div style="left:932px;top:454.74px;width:1px;height:20.67px;background:#e0e0e0;"></div>
<div style="left:1032px;top:454.74px;width:1px;height:20.67px;background:#e0e0e0;"></div>
<div class="tx" style="left:-576.2px;width:600px;text-align:right;top:452.24px;line-height:20px;font-size:12.5px;color:#222;font-weight:normal;"><span style="transform:scaleX(0.66);transform-origin:100% 50%">23</span></div>
<div class="tx" style="left:30px;top:452.74px;line-height:20px;font-size:11px;color:#222;font-weight:normal;"><span style="transform:scaleX(0.83);transform-origin:0 50%">장군가스</span></div>
<div class="tx" style="left:155px;top:452.74px;line-height:20px;font-size:11px;color:#222;font-weight:normal;"><span style="transform:scaleX(0.8);transform-origin:0 50%">용화로26</span></div>
<div class="tx" style="left:95.69999999999999px;width:600px;text-align:center;top:452.74px;line-height:20px;font-size:11px;color:#222;font-weight:normal;"><span style="transform:scaleX(0.83);transform-origin:50% 50%">개별공급</span></div>
<div class="tx" style="left:170.7px;width:600px;text-align:center;top:453.24px;line-height:20px;font-size:12.5px;color:#222;font-weight:normal;"><span style="transform:scaleX(0.66);transform-origin:50% 50%">6003098</span></div>
<div style="left:568.7px;top:463px;width:4px;height:2px;background:#555;"></div>
<div style="left:26px;top:475.41px;width:1006px;height:20.67px;background:#fff;border-bottom:1px solid #dedede;"></div>
<div style="left:0px;top:475.41px;width:26px;height:20.67px;background:#fff;border-bottom:1px solid #dedede;"></div>
<div style="left:26px;top:475.41px;width:1px;height:20.67px;background:#e0e0e0;"></div>
<div style="left:151px;top:475.41px;width:1px;height:20.67px;background:#e0e0e0;"></div>
<div style="left:357px;top:475.41px;width:1px;height:20.67px;background:#e0e0e0;"></div>
<div style="left:432px;top:475.41px;width:1px;height:20.67px;background:#e0e0e0;"></div>
<div style="left:507px;top:475.41px;width:1px;height:20.67px;background:#e0e0e0;"></div>
<div style="left:632px;top:475.41px;width:1px;height:20.67px;background:#e0e0e0;"></div>
<div style="left:732px;top:475.41px;width:1px;height:20.67px;background:#e0e0e0;"></div>
<div style="left:832px;top:475.41px;width:1px;height:20.67px;background:#e0e0e0;"></div>
<div style="left:932px;top:475.41px;width:1px;height:20.67px;background:#e0e0e0;"></div>
<div style="left:1032px;top:475.41px;width:1px;height:20.67px;background:#e0e0e0;"></div>
<div class="tx" style="left:-576.2px;width:600px;text-align:right;top:472.91px;line-height:20px;font-size:12.5px;color:#222;font-weight:normal;"><span style="transform:scaleX(0.66);transform-origin:100% 50%">24</span></div>
<div class="tx" style="left:30px;top:473.41px;line-height:20px;font-size:11px;color:#222;font-weight:normal;"><span style="transform:scaleX(0.83);transform-origin:0 50%">장군가스</span></div>
<div class="tx" style="left:155px;top:473.41px;line-height:20px;font-size:11px;color:#222;font-weight:normal;"><span style="transform:scaleX(0.8);transform-origin:0 50%">이촌 해란일</span></div>
<div class="tx" style="left:95.69999999999999px;width:600px;text-align:center;top:473.41px;line-height:20px;font-size:11px;color:#222;font-weight:normal;"><span style="transform:scaleX(0.83);transform-origin:50% 50%">개별공급</span></div>
<div class="tx" style="left:170.7px;width:600px;text-align:center;top:473.91px;line-height:20px;font-size:12.5px;color:#222;font-weight:normal;"><span style="transform:scaleX(0.66);transform-origin:50% 50%">1000484</span></div>
<div style="left:568.7px;top:484px;width:4px;height:2px;background:#555;"></div>
</div>
<div style="left:1421px;top:561px;width:12px;height:484px;background:#f1f1f1;"></div>
<div style="left:1422px;top:575px;width:10px;height:335px;background:#c1c1c1;"></div>
<svg style="position:absolute;left:1422px;top:565px" width="10" height="6"><path d="M1 5 L5 1 L9 5 Z" fill="#b0b0b0"/></svg>
<svg style="position:absolute;left:1422px;top:1035px" width="10" height="6"><path d="M1.5 1 L5 4.5 L8.5 1 Z" fill="#404040"/></svg>
<div style="left:156px;top:1045px;width:1277px;height:21px;background:#eef0f4;border-top:1px solid #d8d8d8;"></div>
<div class="tx" style="left:161px;top:1045.5px;line-height:20px;font-size:11px;color:#111;font-weight:normal;"><span style="transform:scaleX(0.8);transform-origin:0 50%">전체</span></div>
<div class="tx" style="left:182px;top:1045.5px;line-height:20px;font-size:12px;color:#10105a;font-weight:bold;"><span style="transform:scaleX(0.78);transform-origin:0 50%">32</span></div>
<div class="tx" style="left:195.5px;top:1045.5px;line-height:20px;font-size:11px;color:#111;font-weight:normal;"><span style="transform:scaleX(0.8);transform-origin:0 50%">건</span></div>
<div style="left:155px;top:1066px;width:1279px;height:2px;background:#1553a7;"></div>
<div style="left:1438px;top:481px;width:478px;height:588px;background:#fff;border:1px solid #a3c0dc;"></div>
<div style="left:1439px;top:482px;width:476px;height:24px;background:linear-gradient(#e0eefc,#d2e3f8);border-bottom:1px solid #a3bfdc;"></div>
<div class="tx" style="left:1442px;top:483px;line-height:20px;font-size:10px;color:#2a2a2a;font-weight:normal;"><span style="transform:scaleX(0.85);transform-origin:0 50%">전일 수집현황</span></div>
<svg style="position:absolute;left:1903px;top:489px" width="8" height="10"><path d="M2.2 1.5 L5.6 5 L2.2 8.5" fill="none" stroke="#111" stroke-width="1.9"/></svg>
<div class="tx" style="left:1370px;width:600px;text-align:center;top:515px;line-height:20px;font-size:12px;color:#222;font-weight:normal;"><span style="transform:scaleX(0.9);transform-origin:50% 50%">단선</span></div>
<div style="left:1471px;top:535px;width:429px;height:202px;background:#f0f1f3;"></div>
<div style="left:1471px;top:534.1px;width:429px;height:1px;background-image:linear-gradient(90deg,#a0a0a0 50%,transparent 50%);background-size:4.48px 1px;background-position:1px 0;"></div>
<div style="left:1465px;top:533.6px;width:3px;height:2px;background:#555;"></div>
<div class="tx" style="left:862px;width:600px;text-align:right;top:525.1px;line-height:20px;font-size:12.5px;color:#222;font-weight:normal;"><span style="transform:scaleX(0.748);transform-origin:100% 50%">1</span></div>
<div style="left:1471px;top:554.49px;width:429px;height:1px;background-image:linear-gradient(90deg,#a0a0a0 50%,transparent 50%);background-size:4.48px 1px;background-position:1px 0;"></div>
<div style="left:1465px;top:553.99px;width:3px;height:2px;background:#555;"></div>
<div class="tx" style="left:862px;width:600px;text-align:right;top:545.49px;line-height:20px;font-size:12.5px;color:#222;font-weight:normal;"><span style="transform:scaleX(0.748);transform-origin:100% 50%">0.9</span></div>
<div style="left:1471px;top:574.88px;width:429px;height:1px;background-image:linear-gradient(90deg,#a0a0a0 50%,transparent 50%);background-size:4.48px 1px;background-position:1px 0;"></div>
<div style="left:1465px;top:574.38px;width:3px;height:2px;background:#555;"></div>
<div class="tx" style="left:862px;width:600px;text-align:right;top:565.88px;line-height:20px;font-size:12.5px;color:#222;font-weight:normal;"><span style="transform:scaleX(0.748);transform-origin:100% 50%">0.8</span></div>
<div style="left:1471px;top:595.27px;width:429px;height:1px;background-image:linear-gradient(90deg,#a0a0a0 50%,transparent 50%);background-size:4.48px 1px;background-position:1px 0;"></div>
<div style="left:1465px;top:594.77px;width:3px;height:2px;background:#555;"></div>
<div class="tx" style="left:862px;width:600px;text-align:right;top:586.27px;line-height:20px;font-size:12.5px;color:#222;font-weight:normal;"><span style="transform:scaleX(0.748);transform-origin:100% 50%">0.7</span></div>
<div style="left:1471px;top:615.66px;width:429px;height:1px;background-image:linear-gradient(90deg,#a0a0a0 50%,transparent 50%);background-size:4.48px 1px;background-position:1px 0;"></div>
<div style="left:1465px;top:615.16px;width:3px;height:2px;background:#555;"></div>
<div class="tx" style="left:862px;width:600px;text-align:right;top:606.66px;line-height:20px;font-size:12.5px;color:#222;font-weight:normal;"><span style="transform:scaleX(0.748);transform-origin:100% 50%">0.6</span></div>
<div style="left:1471px;top:636.05px;width:429px;height:1px;background-image:linear-gradient(90deg,#a0a0a0 50%,transparent 50%);background-size:4.48px 1px;background-position:1px 0;"></div>
<div style="left:1465px;top:635.55px;width:3px;height:2px;background:#555;"></div>
<div class="tx" style="left:862px;width:600px;text-align:right;top:627.05px;line-height:20px;font-size:12.5px;color:#222;font-weight:normal;"><span style="transform:scaleX(0.748);transform-origin:100% 50%">0.5</span></div>
<div style="left:1471px;top:656.44px;width:429px;height:1px;background-image:linear-gradient(90deg,#a0a0a0 50%,transparent 50%);background-size:4.48px 1px;background-position:1px 0;"></div>
<div style="left:1465px;top:655.94px;width:3px;height:2px;background:#555;"></div>
<div class="tx" style="left:862px;width:600px;text-align:right;top:647.44px;line-height:20px;font-size:12.5px;color:#222;font-weight:normal;"><span style="transform:scaleX(0.748);transform-origin:100% 50%">0.4</span></div>
<div style="left:1471px;top:676.83px;width:429px;height:1px;background-image:linear-gradient(90deg,#a0a0a0 50%,transparent 50%);background-size:4.48px 1px;background-position:1px 0;"></div>
<div style="left:1465px;top:676.33px;width:3px;height:2px;background:#555;"></div>
<div class="tx" style="left:862px;width:600px;text-align:right;top:667.83px;line-height:20px;font-size:12.5px;color:#222;font-weight:normal;"><span style="transform:scaleX(0.748);transform-origin:100% 50%">0.3</span></div>
<div style="left:1471px;top:697.22px;width:429px;height:1px;background-image:linear-gradient(90deg,#a0a0a0 50%,transparent 50%);background-size:4.48px 1px;background-position:1px 0;"></div>
<div style="left:1465px;top:696.72px;width:3px;height:2px;background:#555;"></div>
<div class="tx" style="left:862px;width:600px;text-align:right;top:688.22px;line-height:20px;font-size:12.5px;color:#222;font-weight:normal;"><span style="transform:scaleX(0.748);transform-origin:100% 50%">0.2</span></div>
<div style="left:1471px;top:717.61px;width:429px;height:1px;background-image:linear-gradient(90deg,#a0a0a0 50%,transparent 50%);background-size:4.48px 1px;background-position:1px 0;"></div>
<div style="left:1465px;top:717.11px;width:3px;height:2px;background:#555;"></div>
<div class="tx" style="left:862px;width:600px;text-align:right;top:708.61px;line-height:20px;font-size:12.5px;color:#222;font-weight:normal;"><span style="transform:scaleX(0.748);transform-origin:100% 50%">0.1</span></div>
<div style="left:1465px;top:737.5px;width:3px;height:2px;background:#555;"></div>
<div class="tx" style="left:862px;width:600px;text-align:right;top:729.0px;line-height:20px;font-size:12.5px;color:#222;font-weight:normal;"><span style="transform:scaleX(0.748);transform-origin:100% 50%">0</span></div>
<div style="left:1468px;top:534px;width:2px;height:210px;background:#666;"></div>
<div style="left:1465px;top:738px;width:436px;height:1.4px;background:#111;"></div>
<div style="left:1899.6px;top:738px;width:1.5px;height:6px;background:#333;"></div>
<div style="left:1027px;top:310px;width:19px;height:1.2px;background-image:linear-gradient(90deg,#7fa3cf 60%,transparent 60%);background-size:3px 1px;"></div>
<div style="left:1027px;top:478px;width:19px;height:1.2px;background-image:linear-gradient(90deg,#7fa3cf 60%,transparent 60%);background-size:3px 1px;"></div>
<div style="left:1435.5px;top:765px;width:1.2px;height:20px;background-image:linear-gradient(#a9c0dc 60%,transparent 60%);background-size:1px 3px;"></div>
<div style="left:150.5px;top:556px;width:1.2px;height:20px;background-image:linear-gradient(#7fa3cf 60%,transparent 60%);background-size:1px 3px;"></div>
<div style="left:1330px;top:207px;width:1.2px;height:20px;background-image:linear-gradient(#a9c0dc 60%,transparent 60%);background-size:1px 3px;"></div>
<div style="left:742px;top:207px;width:1.2px;height:20px;background-image:linear-gradient(#a9c0dc 60%,transparent 60%);background-size:1px 3px;"></div>
<div style="left:0px;top:1073px;width:1919px;height:27px;background:#dde9f9;border:1px solid #a9c5e2;border-left:none;"></div>
<div class="tx" style="left:4px;top:1077px;line-height:20px;font-size:10.5px;color:#555;font-weight:normal;"><span style="transform:scaleX(0.785);transform-origin:0 50%">Copyright (C) 2015 by Firedogs Co., Ltd. All Rights Reserved. ( 문의 : 1577-2361 )</span></div>
<div class="tx" style="left:1308.5px;width:600px;text-align:right;top:1077px;line-height:20px;font-size:10.5px;color:#555;font-weight:normal;"><span style="transform:scaleX(0.81);transform-origin:100% 50%">총 : 286  대기 : 8  사용 : 278</span></div></body></html>
